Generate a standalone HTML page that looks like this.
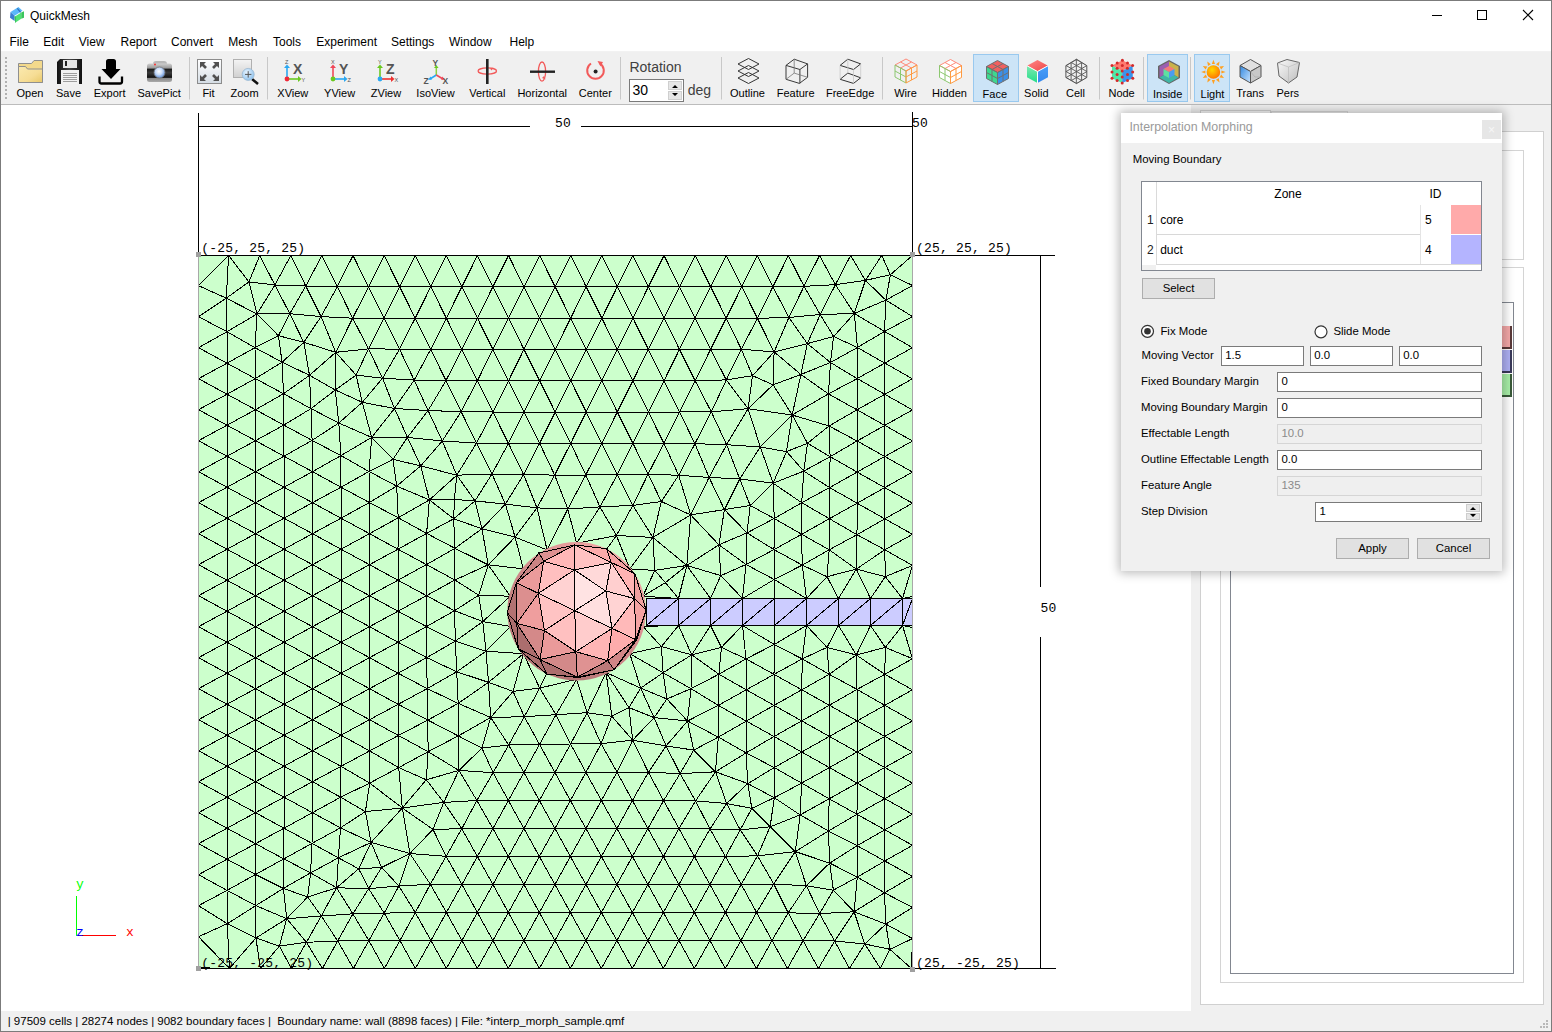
<!DOCTYPE html>
<html><head><meta charset="utf-8"><style>
html,body{margin:0;padding:0;width:1552px;height:1032px;overflow:hidden;background:#f0f0f0;font-family:"Liberation Sans", sans-serif;}
.r{position:absolute;}
.t{position:absolute;white-space:pre;}
</style></head><body>
<div class="r" style="left:0px;top:0px;width:1552px;height:52px;background:#fff"></div><div class="r" style="left:0px;top:51px;width:1552px;height:1px;background:#f2f2f2"></div><svg class="r" style="left:6px;top:4px" width="24" height="24" viewBox="0 0 24 24"><polygon points="4.5,8 12.5,3 16.5,6.8 8.6,11.8" fill="#5ab8fa"/><polygon points="4.5,8 8.6,11.8 8.6,17 4,13.8" fill="#3b7fd2"/><path d="M11.3 4.3L14.6 8.3" stroke="#2f6fbf" stroke-width="1.2"/><polygon points="8.6,12.8 15.2,8.6 15.2,14.8 9.2,18.8" fill="#4fe274"/><polygon points="15.2,8.6 18,7.2 18,13.8 15.2,14.8" fill="#3bc45e"/><polygon points="8.6,12.8 9.6,12.2 9.6,18.5 9.2,18.8" fill="#2fae4f"/></svg><div class="t" style="left:30px;top:9.84px;font-size:12px;line-height:12px;color:#000;font-family:"Liberation Sans", sans-serif;">QuickMesh</div><div class="r" style="left:1432px;top:15px;width:10px;height:1px;background:#000"></div><div class="r" style="left:1477px;top:10px;width:10px;height:10px;border:1px solid #000;box-sizing:border-box"></div><svg class="r" style="left:1522px;top:9px" width="12" height="12" viewBox="0 0 12 12"><path d="M1 1L11 11M11 1L1 11" stroke="#000" stroke-width="1.1"/></svg><div class="t" style="left:9.5px;top:35.54px;font-size:12px;line-height:12px;color:#000;font-family:"Liberation Sans", sans-serif;">File</div><div class="t" style="left:43.3px;top:35.54px;font-size:12px;line-height:12px;color:#000;font-family:"Liberation Sans", sans-serif;">Edit</div><div class="t" style="left:78.8px;top:35.54px;font-size:12px;line-height:12px;color:#000;font-family:"Liberation Sans", sans-serif;">View</div><div class="t" style="left:120.5px;top:35.54px;font-size:12px;line-height:12px;color:#000;font-family:"Liberation Sans", sans-serif;">Report</div><div class="t" style="left:171px;top:35.54px;font-size:12px;line-height:12px;color:#000;font-family:"Liberation Sans", sans-serif;">Convert</div><div class="t" style="left:228.2px;top:35.54px;font-size:12px;line-height:12px;color:#000;font-family:"Liberation Sans", sans-serif;">Mesh</div><div class="t" style="left:273px;top:35.54px;font-size:12px;line-height:12px;color:#000;font-family:"Liberation Sans", sans-serif;">Tools</div><div class="t" style="left:316.3px;top:35.54px;font-size:12px;line-height:12px;color:#000;font-family:"Liberation Sans", sans-serif;">Experiment</div><div class="t" style="left:391px;top:35.54px;font-size:12px;line-height:12px;color:#000;font-family:"Liberation Sans", sans-serif;">Settings</div><div class="t" style="left:449px;top:35.54px;font-size:12px;line-height:12px;color:#000;font-family:"Liberation Sans", sans-serif;">Window</div><div class="t" style="left:509.5px;top:35.54px;font-size:12px;line-height:12px;color:#000;font-family:"Liberation Sans", sans-serif;">Help</div><div class="r" style="left:0px;top:53px;width:1552px;height:51px;background:#f0f0f0"></div><div class="r" style="left:0px;top:104px;width:1552px;height:1px;background:#bcbcbc"></div><svg class="r" style="left:0;top:52px" width="1552" height="52" viewBox="0 52 1552 52"><defs>
<linearGradient id="gFold" x1="0" y1="0" x2="1" y2="1"><stop offset="0" stop-color="#fbeab0"/><stop offset="0.6" stop-color="#f6dd95"/><stop offset="1" stop-color="#e8c868"/></linearGradient>
<linearGradient id="gFit" x1="0" y1="0" x2="0" y2="1"><stop offset="0" stop-color="#ffffff"/><stop offset="1" stop-color="#d4dce4"/></linearGradient>
<linearGradient id="gZoom" x1="0" y1="0" x2="0" y2="1"><stop offset="0" stop-color="#f4f4f4"/><stop offset="1" stop-color="#d0d0d0"/></linearGradient>
<radialGradient id="gLens" cx="0.45" cy="0.4" r="0.6"><stop offset="0" stop-color="#ffffff"/><stop offset="0.5" stop-color="#c9dcf8"/><stop offset="1" stop-color="#5f8fd8"/></radialGradient>
<radialGradient id="gMag" cx="0.4" cy="0.35" r="0.7"><stop offset="0" stop-color="#e8f4ff"/><stop offset="1" stop-color="#8cc0ec"/></radialGradient>
<linearGradient id="gCam" x1="0" y1="0" x2="0" y2="1"><stop offset="0" stop-color="#d0d0d0"/><stop offset="0.25" stop-color="#9a9a9a"/><stop offset="0.3" stop-color="#1a1a1a"/><stop offset="0.5" stop-color="#3a3a3a"/><stop offset="0.75" stop-color="#111"/><stop offset="0.8" stop-color="#888"/><stop offset="1" stop-color="#aaa"/></linearGradient>
<linearGradient id="gFlop" x1="0" y1="0" x2="1" y2="0"><stop offset="0" stop-color="#111"/><stop offset="0.5" stop-color="#444"/><stop offset="1" stop-color="#111"/></linearGradient>
<radialGradient id="gSun" cx="0.4" cy="0.35" r="0.7"><stop offset="0" stop-color="#ffd800"/><stop offset="1" stop-color="#ff7000"/></radialGradient>
<linearGradient id="gTransL" x1="0" y1="0" x2="1" y2="1"><stop offset="0" stop-color="#2f86e0"/><stop offset="1" stop-color="#cde6ff"/></linearGradient>
<linearGradient id="gGray" x1="0" y1="0" x2="1" y2="1"><stop offset="0" stop-color="#fafafa"/><stop offset="1" stop-color="#bdbdbd"/></linearGradient>
<linearGradient id="gSolT" x1="0" y1="0" x2="1" y2="1"><stop offset="0" stop-color="#ff8888"/><stop offset="1" stop-color="#ee4444"/></linearGradient>
<linearGradient id="gSolL" x1="0" y1="0" x2="0" y2="1"><stop offset="0" stop-color="#7ee8b0"/><stop offset="1" stop-color="#22dd88"/></linearGradient>
<linearGradient id="gSolR" x1="0" y1="0" x2="0" y2="1"><stop offset="0" stop-color="#4aa0f8"/><stop offset="1" stop-color="#3388ee"/></linearGradient>
</defs><g fill="#b0b0b0"><rect x="5" y="57" width="2" height="2"/><rect x="5" y="61" width="2" height="2"/><rect x="5" y="65" width="2" height="2"/><rect x="5" y="69" width="2" height="2"/><rect x="5" y="73" width="2" height="2"/><rect x="5" y="77" width="2" height="2"/><rect x="5" y="81" width="2" height="2"/><rect x="5" y="85" width="2" height="2"/><rect x="5" y="89" width="2" height="2"/><rect x="5" y="93" width="2" height="2"/><rect x="5" y="97" width="2" height="2"/></g><path d="M189.5 57V99.5" stroke="#c8c8c8" stroke-width="1"/><path d="M267.5 57V99.5" stroke="#c8c8c8" stroke-width="1"/><path d="M620.5 57V99.5" stroke="#c8c8c8" stroke-width="1"/><path d="M721.5 57V99.5" stroke="#c8c8c8" stroke-width="1"/><path d="M882.5 57V99.5" stroke="#c8c8c8" stroke-width="1"/><path d="M1099.5 57V99.5" stroke="#c8c8c8" stroke-width="1"/><path d="M1143.5 57V99.5" stroke="#c8c8c8" stroke-width="1"/><path d="M1190.5 57V99.5" stroke="#c8c8c8" stroke-width="1"/><rect x="973.5" y="54.5" width="45" height="47" fill="#cce4f7" stroke="#99c9ef"/><rect x="1147.5" y="54.5" width="40" height="47" fill="#cce4f7" stroke="#99c9ef"/><rect x="1194.5" y="54.5" width="35" height="47" fill="#cce4f7" stroke="#99c9ef"/><path d="M18.5 63.5H31.5L34 60.5H42.5V82.5H18.5Z" fill="#f3d98c" stroke="#8f8f8f"/><path d="M18.5 66.5H25.5L27.5 69H42.5V82.5H18.5Z" fill="url(#gFold)" stroke="#8f8f8f"/><path d="M60 59H82V84H57V62Z" fill="url(#gFlop)"/><rect x="63" y="60" width="14" height="8" fill="#e6e6e6"/><rect x="65" y="61" width="2" height="5" fill="#222"/><rect x="61" y="70" width="18" height="14" fill="#f2f2f2"/><path d="M63 73.5H77M63 75.5H77M63 77.5H77M63 79.5H77M63 81.5H77" stroke="#888" stroke-width="0.8"/><path d="M106 61.5Q106 59 108.5 59H113.5Q116 59 116 61.5V69H120.5L111 79L101.5 69H106Z" fill="#000"/><path d="M99.5 76.5V81.5Q99.5 83.5 101.5 83.5H120Q122 83.5 122 81.5V76.5" fill="none" stroke="#000" stroke-width="2.3"/><path d="M153 64Q153 61 156 61H164Q167 61 167 64Z" fill="#b8b8b8"/><rect x="147" y="63.5" width="25" height="18.5" rx="2.5" fill="url(#gCam)"/><circle cx="159.5" cy="72.5" r="5.5" fill="url(#gLens)" stroke="#777" stroke-width="0.8"/><circle cx="155" cy="64.5" r="0.9" fill="#f22"/><rect x="197.5" y="59.5" width="24" height="24" fill="url(#gFit)" stroke="#8c8c8c"/><path d="M206 68L201 63" stroke="#505050" stroke-width="2.6"/><path d="M213 68L218 63" stroke="#505050" stroke-width="2.6"/><path d="M206 75L201 80" stroke="#505050" stroke-width="2.6"/><path d="M213 75L218 80" stroke="#505050" stroke-width="2.6"/><path d="M200 62h6l-6 6z M219 62h-6l6 6z M200 81h6l-6-6z M219 81h-6l6-6z" fill="#505050"/><rect x="233.5" y="59.5" width="18" height="18" fill="url(#gZoom)" stroke="#b0b0b0"/><path d="M252 79L258 84" stroke="#111" stroke-width="2.6"/><circle cx="248.2" cy="74.4" r="6" fill="url(#gMag)" stroke="#9ab8d0" stroke-width="0.8"/><path d="M245 74.4H251.4M248.2 71.2V77.6" stroke="#555" stroke-width="1"/><path d="M287 79V67" stroke="#2aa8f2" stroke-width="1.6"/><path d="M284 68L287 64.5L290 68Z" fill="#2aa8f2"/><path d="M287 79H299" stroke="#6ac820" stroke-width="1.6"/><path d="M298 76L301.5 79L298 82Z" fill="#6ac820"/><circle cx="287" cy="79" r="2.4" fill="#f02838"/><text x="293" y="73.8" font-family="Liberation Sans" font-weight="bold" font-size="14" fill="#555">X</text><text x="285" y="64" font-family="Liberation Sans" font-size="5.5" fill="#555">Z</text><text x="301.5" y="81.5" font-family="Liberation Sans" font-size="5.5" fill="#555">Y</text><path d="M333 79V67" stroke="#f04858" stroke-width="1.6"/><path d="M330 68L333 64.5L336 68Z" fill="#f04858"/><path d="M333 79H345" stroke="#2aa8f2" stroke-width="1.6"/><path d="M344 76L347.5 79L344 82Z" fill="#2aa8f2"/><circle cx="333" cy="79" r="2.4" fill="#6ac820"/><text x="339" y="73.8" font-family="Liberation Sans" font-weight="bold" font-size="14" fill="#555">Y</text><text x="331" y="64" font-family="Liberation Sans" font-size="5.5" fill="#555">X</text><text x="347.5" y="81.5" font-family="Liberation Sans" font-size="5.5" fill="#555">Z</text><path d="M380 79V67" stroke="#6ac820" stroke-width="1.6"/><path d="M377 68L380 64.5L383 68Z" fill="#6ac820"/><path d="M380 79H392" stroke="#f03030" stroke-width="1.6"/><path d="M391 76L394.5 79L391 82Z" fill="#f03030"/><circle cx="380" cy="79" r="2.4" fill="#2aa8f2"/><text x="386" y="73.8" font-family="Liberation Sans" font-weight="bold" font-size="14" fill="#555">Z</text><text x="378" y="64" font-family="Liberation Sans" font-size="5.5" fill="#555">Y</text><text x="394.5" y="81.5" font-family="Liberation Sans" font-size="5.5" fill="#555">X</text><path d="M436.3 75V67.5" stroke="#8ad040" stroke-width="1.5"/><path d="M434 68L436.3 65L438.6 68Z" fill="#6ac820"/><path d="M436.3 75L430 79" stroke="#2aa8f2" stroke-width="1.5"/><path d="M428 80L430.5 76.5L432 79.5Z" fill="#2aa8f2"/><path d="M436.3 75L443 79" stroke="#f04858" stroke-width="1.5"/><path d="M445 80L442.5 76.5L441 79.5Z" fill="#f04858"/><text x="432.5" y="66" font-family="Liberation Sans" font-weight="bold" font-size="8.5" fill="#555">Y</text><text x="423.5" y="83.5" font-family="Liberation Sans" font-weight="bold" font-size="8.5" fill="#555">Z</text><text x="442.5" y="83.5" font-family="Liberation Sans" font-weight="bold" font-size="8.5" fill="#555">X</text><ellipse cx="487.3" cy="71" rx="9.2" ry="3.1" fill="none" stroke="#f25a5a" stroke-width="1.3"/><rect x="486" y="59" width="2.6" height="25" fill="#222"/><path d="M490 68.5L493.5 67.5L491.5 70.5Z" fill="#f25a5a"/><ellipse cx="542" cy="71.6" rx="3.6" ry="9.6" fill="none" stroke="#f25a5a" stroke-width="1.3"/><rect x="530" y="70.5" width="25" height="2.4" fill="#222"/><path d="M544 76L545.5 79.5L542 78Z" fill="#f25a5a"/><path d="M591 63.5A8.3 8.3 0 1 0 600 63.5" fill="none" stroke="#f25a5a" stroke-width="2"/><path d="M597.5 61L603 62L600.5 66.5Z" fill="#f25a5a"/><circle cx="595.6" cy="71.6" r="2" fill="#222"/><path d="M738 64L748.5 58.5L759 64L748.5 69.5Z" fill="none" stroke="#333" stroke-width="1"/><path d="M738 71L748.5 65.5L759 71L748.5 76.5Z" fill="none" stroke="#333" stroke-width="1"/><path d="M738 78L748.5 72.5L759 78L748.5 83.5Z" fill="none" stroke="#333" stroke-width="1"/><path d="M794.2 59.2L807.6 63.9L799.9 69.5L786 65.4Z M786 65.4V79.3L799.4 83.4L807.6 77.3V63.9 M799.9 69.5V83.4" fill="none" stroke="#3a3a3a" stroke-width="1"/><path d="M794.2 59.2V73.1L786 79.3M794.2 73.1L807.6 77.3" fill="none" stroke="#777" stroke-width="0.8"/><path d="M847.8 59.2L860.7 63.9L853.5 69.5L840.1 65.4Z M847.8 73.1L860.7 77.8L853.5 83.4L840.1 79.3Z" fill="none" stroke="#333" stroke-width="1"/><path d="M840.1 65.4V79.3M853.5 69.5V83.4M860.7 63.9V77.8M847.8 59.2V73.1" stroke="#c8c8c8" stroke-width="0.8"/><polygon points="906.0,59.0 917.0,65.0 906.0,71.0 895.0,65.0" fill="none" stroke="#ff8a7a" stroke-width="1"/><path d="M911.5 62.0L900.5 68.0M900.5 62.0L911.5 68.0" stroke="#ff8a7a" stroke-width="1"/><polygon points="895.0,65.0 906.0,71.0 906.0,83.0 895.0,77.0" fill="none" stroke="#8cc870" stroke-width="1"/><path d="M900.5 68.0L900.5 80.0M895.0 71.0L906.0 77.0" stroke="#8cc870" stroke-width="1"/><polygon points="906.0,71.0 917.0,65.0 917.0,77.0 906.0,83.0" fill="none" stroke="#ff9a40" stroke-width="1"/><path d="M911.5 68.0L911.5 80.0M906.0 77.0L917.0 71.0" stroke="#ff9a40" stroke-width="1"/><polygon points="950.5,59.5 961.5,65.5 950.5,71.5 939.5,65.5" fill="#fff"/><polygon points="939.5,65.5 950.5,71.5 950.5,83.5 939.5,77.5" fill="#fff"/><polygon points="950.5,71.5 961.5,65.5 961.5,77.5 950.5,83.5" fill="#fff"/><polygon points="950.5,59.5 961.5,65.5 950.5,71.5 939.5,65.5" fill="none" stroke="#ff8a7a" stroke-width="1"/><path d="M956.0 62.5L945.0 68.5M945.0 62.5L956.0 68.5" stroke="#ff8a7a" stroke-width="1"/><polygon points="939.5,65.5 950.5,71.5 950.5,83.5 939.5,77.5" fill="none" stroke="#8cc870" stroke-width="1"/><path d="M945.0 68.5L945.0 80.5M939.5 71.5L950.5 77.5" stroke="#8cc870" stroke-width="1"/><polygon points="950.5,71.5 961.5,65.5 961.5,77.5 950.5,83.5" fill="none" stroke="#ff9a40" stroke-width="1"/><path d="M956.0 68.5L956.0 80.5M950.5 77.5L961.5 71.5" stroke="#ff9a40" stroke-width="1"/><polygon points="997.5,60.5 1008.5,66.5 997.5,72.5 986.5,66.5" fill="#f06060"/><polygon points="986.5,66.5 997.5,72.5 997.5,84.5 986.5,78.5" fill="#3dd890"/><polygon points="997.5,72.5 1008.5,66.5 1008.5,78.5 997.5,84.5" fill="#3a90e8"/><polygon points="997.5,60.5 1008.5,66.5 997.5,72.5 986.5,66.5" fill="none" stroke="#707070" stroke-width="1"/><path d="M1003.0 63.5L992.0 69.5M992.0 63.5L1003.0 69.5" stroke="#707070" stroke-width="1"/><polygon points="986.5,66.5 997.5,72.5 997.5,84.5 986.5,78.5" fill="none" stroke="#707070" stroke-width="1"/><path d="M992.0 69.5L992.0 81.5M986.5 72.5L997.5 78.5" stroke="#707070" stroke-width="1"/><polygon points="997.5,72.5 1008.5,66.5 1008.5,78.5 997.5,84.5" fill="none" stroke="#707070" stroke-width="1"/><path d="M1003.0 69.5L1003.0 81.5M997.5 78.5L1008.5 72.5" stroke="#707070" stroke-width="1"/><polygon points="1037.5,60.0 1048.0,65.8 1037.5,71.5 1027.0,65.8" fill="url(#gSolT)"/><polygon points="1027.0,65.8 1037.5,71.5 1037.5,83.0 1027.0,77.2" fill="url(#gSolL)"/><polygon points="1037.5,71.5 1048.0,65.8 1048.0,77.2 1037.5,83.0" fill="url(#gSolR)"/><path d="M1037.5 71.5V83M1027 65.75L1037.5 71.5L1048 65.75" stroke="#fff" stroke-width="1" fill="none"/><clipPath id="hexc"><polygon points="1076.5,59.2 1086.8,65.6 1086.8,77.5 1076.5,83.6 1065.9,77.5 1065.9,65.6"/></clipPath><path clip-path="url(#hexc)" d="M1071.12 58V85M1076.35 58V85M1081.58 58V85M1060 14.03L1093 33.07M1060 33.07L1093 14.03M1060 20.03L1093 39.07M1060 39.07L1093 20.03M1060 26.03L1093 45.07M1060 45.07L1093 26.03M1060 32.03L1093 51.07M1060 51.07L1093 32.03M1060 38.03L1093 57.07M1060 57.07L1093 38.03M1060 44.03L1093 63.07M1060 63.07L1093 44.03M1060 50.03L1093 69.07M1060 69.07L1093 50.03M1060 56.03L1093 75.07M1060 75.07L1093 56.03M1060 62.03L1093 81.07M1060 81.07L1093 62.03M1060 68.03L1093 87.07M1060 87.07L1093 68.03M1060 74.03L1093 93.07M1060 93.07L1093 74.03M1060 80.03L1093 99.07M1060 99.07L1093 80.03M1060 86.03L1093 105.07M1060 105.07L1093 86.03M1060 92.03L1093 111.07M1060 111.07L1093 92.03M1060 98.03L1093 117.07M1060 117.07L1093 98.03M1060 104.03L1093 123.07M1060 123.07L1093 104.03M1060 110.03L1093 129.07M1060 129.07L1093 110.03" stroke="#555" stroke-width="0.9" fill="none"/><polygon points="1076.5,59.2 1086.8,65.6 1086.8,77.5 1076.5,83.6 1065.9,77.5 1065.9,65.6" fill="none" stroke="#555" stroke-width="1"/><polygon points="1122.4,60.2 1132.6,65.6 1122.2,71.0 1112.0,65.6" fill="#ff7a70"/><polygon points="1112.0,65.6 1122.2,71.0 1122.2,83.0 1112.0,78.2" fill="#50e8a8"/><polygon points="1122.2,71.0 1132.6,65.6 1132.8,78.2 1122.2,83.0" fill="#3a94ec"/><g fill="#d42a2a"><circle cx="1127.4" cy="68.3" r="1.5"/><circle cx="1117.1" cy="74.5" r="1.5"/><circle cx="1127.5" cy="62.9" r="1.5"/><circle cx="1127.5" cy="74.5" r="1.5"/><circle cx="1117.1" cy="68.3" r="1.5"/><circle cx="1132.7" cy="71.9" r="1.5"/><circle cx="1112.0" cy="65.6" r="1.5"/><circle cx="1132.6" cy="65.6" r="1.5"/><circle cx="1132.8" cy="78.2" r="1.5"/><circle cx="1122.2" cy="71.0" r="1.5"/><circle cx="1122.2" cy="77.0" r="1.5"/><circle cx="1122.2" cy="83.0" r="1.5"/><circle cx="1117.1" cy="80.6" r="1.5"/><circle cx="1127.5" cy="80.6" r="1.5"/><circle cx="1112.0" cy="78.2" r="1.5"/><circle cx="1122.4" cy="60.2" r="1.5"/><circle cx="1117.2" cy="62.9" r="1.5"/><circle cx="1122.3" cy="65.6" r="1.5"/><circle cx="1112.0" cy="71.9" r="1.5"/></g><polygon points="1169,60 1180,66 1180,78 1169,84 1158,78 1158,66" fill="#666"/><polygon points="1169,61.5 1169,72 1159.5,77.5 1159.5,66.5" fill="#9b5fb0"/><polygon points="1169,61.5 1178.5,66.5 1178.5,77.5 1169,72" fill="#c9b24a"/><polygon points="1159.5,77.5 1169,72 1178.5,77.5 1169,83" fill="#3fb6a6"/><polygon points="1169.0,66.0 1174.5,69.0 1169.0,72.0 1163.5,69.0" fill="#f47a7a"/><polygon points="1163.5,69.0 1169.0,72.0 1169.0,78.0 1163.5,75.0" fill="#5ee0a0"/><polygon points="1169.0,72.0 1174.5,69.0 1174.5,75.0 1169.0,78.0" fill="#4a9cf0"/><g fill="#ffa020"><polygon points="1225.6,72.0 1221.4,70.4 1221.4,73.6"/><polygon points="1224.0,78.1 1221.2,74.6 1219.5,77.4"/><polygon points="1219.5,82.6 1218.8,78.1 1216.0,79.8"/><polygon points="1213.4,84.2 1215.0,80.0 1211.8,80.0"/><polygon points="1207.3,82.6 1210.8,79.8 1208.0,78.1"/><polygon points="1202.8,78.1 1207.3,77.4 1205.6,74.6"/><polygon points="1201.2,72.0 1205.4,73.6 1205.4,70.4"/><polygon points="1202.8,65.9 1205.6,69.4 1207.3,66.6"/><polygon points="1207.3,61.4 1208.0,65.9 1210.8,64.2"/><polygon points="1213.4,59.8 1211.8,64.0 1215.0,64.0"/><polygon points="1219.5,61.4 1216.0,64.2 1218.8,65.9"/><polygon points="1224.0,65.9 1219.5,66.6 1221.2,69.4"/></g><circle cx="1213.4" cy="72" r="6.8" fill="url(#gSun)"/><polygon points="1250.5,59.5 1261,65.5 1250.5,71.5 1240,65.5" fill="#e0e0e0" stroke="#555" stroke-width="1"/><polygon points="1240,65.5 1250.5,71.5 1250.5,83 1240,77" fill="url(#gTransL)" stroke="#555" stroke-width="1"/><polygon points="1250.5,71.5 1261,65.5 1261,77 1250.5,83" fill="#c8c8c8" stroke="#555" stroke-width="1"/><path d="M1250.5 71.5L1255 77L1261 77" stroke="#aaa" stroke-width="0.7" fill="none"/><polygon points="1287,59.5 1299.5,62.5 1297,77 1288.5,83 1279,76 1277.5,63" fill="url(#gGray)" stroke="#666" stroke-width="1"/><path d="M1277.5 63L1288.5 67L1299.5 62.5M1288.5 67L1288.5 83" stroke="#bbb" stroke-width="0.7" fill="none"/></svg><div class="t" style="left:-70px;width:200px;text-align:center;top:87.69px;font-size:11px;line-height:11px;color:#000;font-family:"Liberation Sans", sans-serif;">Open</div><div class="t" style="left:-31.5px;width:200px;text-align:center;top:87.69px;font-size:11px;line-height:11px;color:#000;font-family:"Liberation Sans", sans-serif;">Save</div><div class="t" style="left:9.6px;width:200px;text-align:center;top:87.69px;font-size:11px;line-height:11px;color:#000;font-family:"Liberation Sans", sans-serif;">Export</div><div class="t" style="left:59.2px;width:200px;text-align:center;top:87.69px;font-size:11px;line-height:11px;color:#000;font-family:"Liberation Sans", sans-serif;">SavePict</div><div class="t" style="left:108.5px;width:200px;text-align:center;top:87.69px;font-size:11px;line-height:11px;color:#000;font-family:"Liberation Sans", sans-serif;">Fit</div><div class="t" style="left:144.5px;width:200px;text-align:center;top:87.69px;font-size:11px;line-height:11px;color:#000;font-family:"Liberation Sans", sans-serif;">Zoom</div><div class="t" style="left:192.8px;width:200px;text-align:center;top:87.69px;font-size:11px;line-height:11px;color:#000;font-family:"Liberation Sans", sans-serif;">XView</div><div class="t" style="left:239.6px;width:200px;text-align:center;top:87.69px;font-size:11px;line-height:11px;color:#000;font-family:"Liberation Sans", sans-serif;">YView</div><div class="t" style="left:286px;width:200px;text-align:center;top:87.69px;font-size:11px;line-height:11px;color:#000;font-family:"Liberation Sans", sans-serif;">ZView</div><div class="t" style="left:335.5px;width:200px;text-align:center;top:87.69px;font-size:11px;line-height:11px;color:#000;font-family:"Liberation Sans", sans-serif;">IsoView</div><div class="t" style="left:387.3px;width:200px;text-align:center;top:87.69px;font-size:11px;line-height:11px;color:#000;font-family:"Liberation Sans", sans-serif;">Vertical</div><div class="t" style="left:442.2px;width:200px;text-align:center;top:87.69px;font-size:11px;line-height:11px;color:#000;font-family:"Liberation Sans", sans-serif;">Horizontal</div><div class="t" style="left:495.3px;width:200px;text-align:center;top:87.69px;font-size:11px;line-height:11px;color:#000;font-family:"Liberation Sans", sans-serif;">Center</div><div class="t" style="left:647.5px;width:200px;text-align:center;top:87.69px;font-size:11px;line-height:11px;color:#000;font-family:"Liberation Sans", sans-serif;">Outline</div><div class="t" style="left:695.7px;width:200px;text-align:center;top:87.69px;font-size:11px;line-height:11px;color:#000;font-family:"Liberation Sans", sans-serif;">Feature</div><div class="t" style="left:750.1px;width:200px;text-align:center;top:87.69px;font-size:11px;line-height:11px;color:#000;font-family:"Liberation Sans", sans-serif;">FreeEdge</div><div class="t" style="left:805.5px;width:200px;text-align:center;top:87.69px;font-size:11px;line-height:11px;color:#000;font-family:"Liberation Sans", sans-serif;">Wire</div><div class="t" style="left:849.5px;width:200px;text-align:center;top:87.69px;font-size:11px;line-height:11px;color:#000;font-family:"Liberation Sans", sans-serif;">Hidden</div><div class="t" style="left:894.8px;width:200px;text-align:center;top:88.69px;font-size:11px;line-height:11px;color:#000;font-family:"Liberation Sans", sans-serif;">Face</div><div class="t" style="left:936.3px;width:200px;text-align:center;top:87.69px;font-size:11px;line-height:11px;color:#000;font-family:"Liberation Sans", sans-serif;">Solid</div><div class="t" style="left:975.5px;width:200px;text-align:center;top:87.69px;font-size:11px;line-height:11px;color:#000;font-family:"Liberation Sans", sans-serif;">Cell</div><div class="t" style="left:1021.6px;width:200px;text-align:center;top:87.69px;font-size:11px;line-height:11px;color:#000;font-family:"Liberation Sans", sans-serif;">Node</div><div class="t" style="left:1067.7px;width:200px;text-align:center;top:88.69px;font-size:11px;line-height:11px;color:#000;font-family:"Liberation Sans", sans-serif;">Inside</div><div class="t" style="left:1112.5px;width:200px;text-align:center;top:88.69px;font-size:11px;line-height:11px;color:#000;font-family:"Liberation Sans", sans-serif;">Light</div><div class="t" style="left:1150.1px;width:200px;text-align:center;top:87.69px;font-size:11px;line-height:11px;color:#000;font-family:"Liberation Sans", sans-serif;">Trans</div><div class="t" style="left:1187.8px;width:200px;text-align:center;top:87.69px;font-size:11px;line-height:11px;color:#000;font-family:"Liberation Sans", sans-serif;">Pers</div><div class="t" style="left:629.4px;top:59.75px;font-size:14px;line-height:14px;color:#404040;font-family:"Liberation Sans", sans-serif;">Rotation</div><div class="r" style="left:629px;top:79px;width:55px;height:23px;background:#fff;border:1px solid #7a7a7a;box-sizing:border-box"></div><div class="t" style="left:632.5px;top:83.45px;font-size:14px;line-height:14px;color:#000;font-family:"Liberation Sans", sans-serif;">30</div><div class="r" style="left:668px;top:81px;width:14px;height:9px;background:#e6e6e6;border:1px solid #cfcfcf;box-sizing:border-box"></div><div class="r" style="left:668px;top:91px;width:14px;height:9px;background:#e6e6e6;border:1px solid #cfcfcf;box-sizing:border-box"></div><svg class="r" style="left:668px;top:81px" width="14" height="19"><path d="M4 7h6L7 4z M4 12h6L7 15z" fill="#000"/></svg><div class="t" style="left:687.7px;top:83.45px;font-size:14px;line-height:14px;color:#404040;font-family:"Liberation Sans", sans-serif;">deg</div><div class="r" style="left:0px;top:105px;width:1191px;height:906px;background:#fff"></div><svg class="r" style="left:0;top:0" width="1552" height="1032" viewBox="0 0 1552 1032"><defs><clipPath id="ct"><polygon points="198.5,255.5 247,280 284,316 307,339 333,391 357,397 397,438 418,461 455,501 477,524 514,564 530,576 577,611.5 640,590 651,573 715,512 740,487 782,452 768,384 801,370 834,334 855,311 862,280 881,255.5 912.5,255.5"/></clipPath><clipPath id="cr"><polygon points="912.5,255.5 881,255.5 862,280 855,311 834,334 801,370 768,384 782,452 740,487 715,512 651,573 640,590 577,611.5 590,672 600,683 626,709 660,716 694,752 717,774 752,810 771,829 796,852 806,886 834,891 855,913 862,943 881,968.5 912.5,968.5"/></clipPath><clipPath id="cb"><polygon points="912.5,968.5 881,968.5 862,943 855,913 834,891 806,886 796,852 771,829 752,810 717,774 694,752 660,716 626,709 600,683 590,672 577,611.5 530,640 521,654 495,685 464,741 425,781 401,804 382,865 355,870 334,889 307,898 286,919 254,938 198.5,968.5"/></clipPath><clipPath id="cl"><polygon points="198.5,968.5 254,938 286,919 307,898 334,889 355,870 382,865 401,804 425,781 464,741 495,685 521,654 530,640 577,611.5 530,576 514,564 477,524 455,501 418,461 397,438 357,397 333,391 307,339 284,316 247,280 198.5,255.5"/></clipPath></defs><rect x="198.5" y="255.5" width="714.0" height="713.0" fill="#ccffcc"/><g stroke="#000" stroke-width="1" fill="none" shape-rendering="crispEdges"><path d="M539.4 800.5L523.9 772.5M818.4 968.5L849.4 968.5M524 286.8L555.2 286.8M774.5 598.5L806.5 598.5M461.8 349.4L492.9 349.4M652.9 537.4L686.8 565.5M454.5 610.7L455.4 641.1M654.1 717.6L628.9 707.6M774.5 625.5L806.5 625.5M772 940.5L756.4 968.5M492.9 349.4L524 349.4M617.3 412L648.4 412M857.1 441L857.1 472.1M356.1 375.1L335.3 390M773.7 884L806.4 885.8M648.4 412L679.6 412M382.6 378.2L362.3 402.3M801.7 534.3L802.2 565.1M616.4 535.5L652.9 537.4M341 642.2L369.5 657.7M880.4 968.5L864.8 944M284 766.2L312.5 750.7M691.8 654.8L691 688.7M632.9 318.1L617.3 349.4M508.4 443.3L492 474M694.4 912.5L725.4 912.5M554.7 475.1L567.8 509M341 673.2L369.5 688.7M691 688.7L687.5 721M227 518.2L198.5 533.7M539.6 443.3L523.6 474.6M492.9 828.5L523.9 828.5M800.2 814.9L774.3 797.7M554.9 940.5L539.4 968.5M857 814.3L828.4 831M884.8 456.5L857.1 441M773.1 483.2L750.2 505.5M227.3 923.7L255.9 938M523.9 940.5L539.4 912.5M430.8 286.8L446.3 255.5M490.7 717.5L524.3 716.7M857.1 845.7L829.7 863.1M710 829L726.6 803.5M255.5 440.7L255.5 471.7M198.5 936.7L198.5 967.7M352.9 913.8L368.7 888.6M725.5 856.6L740.2 829.9M255.5 471.7L255.5 502.7M884.8 736.4L912.5 752M358.7 868.8L381.6 867.4M371.7 437.4L369 471.5M616.4 535.5L606.1 550M227 487.2L255.5 471.7M399.9 940.5L430.9 940.5M710.5 625.5L742.5 625.5M430.9 940.5L415.4 968.5M255.5 874.5L283.4 888.4M398.9 886L430.3 884.3M398 580.2L426.4 564.6M477.4 318.1L492.9 349.4M305.8 286L321.9 255.5M680.1 773.6L715.5 771.8M726.6 444.7L709.1 477.4M679 828.6L710 829M711.3 411.8L726.6 444.7M801.7 502.7L773.1 483.2M710 829L740.2 829.9M198.5 378.7L198.5 409.7M335.7 352.3L335.3 390M829.7 863.1L806.4 885.8M691.8 654.8L661.4 646.6M508.4 912.5L523.9 884.5M829.4 767.6L801.7 752M801.8 689.8L774 705.4M912.5 689.8L912.5 720.9M774 705.4L746.3 721.1M640.7 688.1L628.9 707.6M709.9 940.5L694.4 912.5M322.4 968.5L353.4 968.5M227 611.2L198.5 595.7M884.5 331.4L857.4 347.5M255.5 657.7L255.5 688.7M740.9 940.5L725.4 912.5M539.4 912.5L523.9 884.5M601.4 800.5L617 772.1M312.5 533.7L312.5 564.7M648.4 772.3L666.1 745.9M306.4 942.3L291.4 968.5M725.4 968.5L756.4 968.5M369.5 626.7L369.5 657.7M586.2 286.8L617.3 286.8M806.5 598.5L838.5 598.5M369.5 657.7L369.5 688.7M740.9 940.5L725.4 968.5M456.7 671.8L458.2 703.4M640.7 688.1L606.1 672.6M806.5 625.5L838.5 625.5M555.2 349.4L586.2 349.4M227 331.7L255 347.7M338.4 857.8L358.7 868.8M857.1 503.2L857 534.7M255.5 626.7L284 611.2M711.3 411.8L748.1 408.7M341 611.2L369.5 595.7M227 363.2L255.3 378.6M857 534.7L856.3 569.1M664 318.1L648.4 349.4M283.5 393.7L309.5 375.3M570.7 443.3L585.8 475M524 349.4L508.5 380.7M227 487.2L198.5 471.7M369.5 626.7L398 642.2M774.1 351.9L773.1 384.8M801.8 689.8L801.7 720.9M695.1 318.1L679.5 349.4M601.8 443.3L617.2 474.7M617.2 474.7L632.8 505.4M556 714.7L576.6 679.3M827 576.7L802.2 565.1M884.8 518.8L857 534.7M686.8 565.5L710.5 598.5M508.7 745L490.7 717.5M774 549.6L746 564.5M585.9 940.5L601.4 912.5M756.6 912.5L741.2 884.4M787.4 968.5L818.4 968.5M748.1 408.7L792.2 415M415.3 912.6L430.3 884.3M772.9 286.8L804 286.3M368.7 888.6L381.6 867.4M402.3 808L426.3 779.8M741.3 349.2L774.1 351.9M774.1 351.9L807.3 343.6M274.9 285L259.7 255.5M570.7 443.3L601.8 443.3M284 549.2L312.5 533.7M227 797.2L198.5 781.7M567.8 509L547.1 550M601.8 443.3L632.9 443.3M227 549.2L255.5 533.7M284 580.2L312.5 564.7M461.9 940.5L492.9 940.5M398 642.2L426.7 657.6M600 506.9L576.6 543.3M690.7 514.9L652.9 537.4M368.5 348.9L382.6 378.2M492.9 940.5L523.9 940.5M884.8 549.8L912.5 565.4M458.2 703.4L458.3 735.9M539.6 318.1L555.2 349.4M663.4 856.5L694.4 856.5M399.5 349.1L414.2 380.1M478.7 595.2L510.3 596.2M492.9 884.5L523.9 884.5M570.7 318.1L586.2 349.4M481.9 748.1L508.7 745M802.2 565.1L774 549.6M760.3 447L792.2 415M443.7 802.4L476.9 800.5M290.8 255.5L321.9 255.5M774 674.4L746 658.9M306.4 942.3L286.7 918.7M830.1 456.7L803.8 471.1M227 549.2L198.5 564.7M585.9 772.4L570.6 744M828.4 831L800.2 814.9M229.4 968.5L260.4 968.5M227 331.7L227 363.2M477.4 968.5L508.4 968.5M885.9 300.1L912.5 285.5M523.9 828.5L508.4 800.5M601.4 912.5L616.9 884.5M198.5 657.7L198.5 688.7M255.5 719.7L255.5 750.7M884.5 331.4L912.5 316.6M227 673.2L198.5 657.7M803.1 940.7L788.2 912.8M555.2 286.8L570.7 255.5M865.4 280.4L854.3 313.5M663.6 800.6L680.1 773.6M312.5 595.7L312.5 626.7M576.6 679.3L547.1 672.6M773.1 483.2L739.7 479M678.9 940.5L694.4 968.5M884.8 425.4L912.5 441M369.5 688.7L369.5 719.7M255.5 688.7L284 704.2M884.8 767.5L884.8 798.7M283.8 425.1L312.1 440.4M884.5 892.8L912.5 876.4M227 766.2L255.5 750.7M255.8 905.6L255.9 938M478.7 595.2L482.8 621.6M752.5 375.7L773.1 384.8M774.2 579.5L806.5 598.5M227 425.2L198.5 440.7M284 456.2L312.5 471.7M554.7 475.1L537 507.9M341 673.2L369.5 657.7M227 425.2L255.5 440.7M829.4 705.3L829.4 736.4M856.3 655L857 689.4M260.4 968.5L255.9 938M757.4 318.3L774.1 351.9M586.2 349.4L570.7 380.7M746.3 721.1L746.1 752.9M227 859.2L198.5 874.7M663.1 672.7L640.7 688.1M788.9 317.5L807.3 343.6M663.9 443.3L678.7 475.3M747 532.9L718.9 544.8M409.9 853.5L381.6 867.4M857.1 845.7L828.4 831M456.8 475.2L429.4 499.9M829.2 674.3L801.8 689.8M774.2 518.5L750.2 505.5M461.9 286.8L446.3 255.5M829.4 705.3L801.7 720.9M458.9 770.4L481.9 748.1M570.6 744L556 714.7M278.4 335.7L282.1 362.2M884.8 767.5L912.5 752M312.4 812.7L312 843.4M678.9 940.5L694.4 912.5M198.5 285.7L198.5 255.5M227 735.2L198.5 750.7M227 611.2L255.5 626.7M338.4 857.8L371.1 842.4M632.8 505.4L661.3 501.5M341 518.2L369.5 533.7M255.8 905.6L283.4 888.4M663.9 443.3L694.9 443.7M284 642.2L312.5 626.7M570.4 912.5L601.4 912.5M505.4 504.1L515.1 537.1M554.9 940.5L585.9 940.5M829.7 863.1L833.4 890.2M718.3 705.4L718.3 737.1M748.1 408.7L726.6 444.7M725.5 856.6L757.5 855.8M885.9 300.1L865.4 280.4M461.8 349.4L477.4 380.7M554.9 884.5L585.9 884.5M801.8 689.8L774 674.4M774 705.4L746.3 689.8M539.5 744.4L570.6 744M398.9 886L409.9 853.5M801.7 720.9L774 705.4M774 736.5L746.3 721.1M857.1 441L830.1 456.7M718.9 544.8L686.8 565.5M585.9 828.5L601.4 800.5M257 314L255 347.7M829.4 518.7L801.7 534.3M601.4 800.5L585.9 772.4M884.8 363.1L857.4 347.5M648.4 772.3L632.7 740.2M912.5 472.1L912.5 503.2M880.4 968.5L911.4 968.5M632.4 800.5L617 772.1M430.3 884.3L409.9 853.5M663.4 912.5L678.9 884.5M680.1 773.6L666.1 745.9M570.7 255.5L601.8 255.5M255.9 938L286.7 918.7M740.2 829.9L751.8 808.4M508.5 318.1L539.6 318.1M286.7 918.7L307.6 897M640.7 688.1L629.8 653.7M341 766.3L340.6 797.2M338.4 857.8L336.6 887.8M227 363.2L255 347.7M426.5 626.6L426.7 657.6M255.5 750.7L284 766.2M284 487.2L312.5 502.7M341 735.2L369.6 750.9M369.5 626.7L398 611.2M283.8 858.9L312 843.4M337.3 286.6L321.1 316.6M601.8 443.3L585.8 475M414.2 380.1L394.5 408.5M399.7 286.8L384.1 255.5M284 518.2L312.5 533.7M617.2 474.7L600 506.9M369.5 657.7L398 642.2M586.2 412L601.8 443.3M632.9 443.3L617.2 474.7M632.8 505.4L616.4 535.5M341 766.3L369.6 750.9M648.1 474.1L632.8 505.4M585.9 828.5L616.9 828.5M807.3 343.6L800.9 374.5M718.9 674.2L691.8 654.8M746 658.9L718.9 674.2M556 714.7L587.1 712.7M488.2 564.8L523.4 568.9M774 549.6L747 532.9M291.4 968.5L322.4 968.5M255.5 533.7L255.5 564.7M616.9 884.5L601.4 856.5M774.2 579.5L746 564.5M227 611.2L227 642.2M198.5 719.7L198.5 750.7M415.3 912.6L398.9 886M476.9 800.5L493.1 772.7M857.3 877.1L833.4 890.2M523.9 772.5L539.5 744.4M311 408.6L312.1 440.4M368.7 888.6L358.7 868.8M912.5 783.1L912.5 814.2M746 564.5L742.5 598.5M394.5 408.5L407.4 437.4M312.1 440.4L312.5 471.7M369.4 502.5L369.5 533.7M461.9 286.8L492.9 286.8M227 704.2L198.5 688.7M369.5 533.7L369.5 564.7M393 459.3L420.7 465.9M454.9 548.3L454.9 580M774.3 797.7L751.8 808.4M726.6 803.5L747.8 783.6M742.5 625.5L774.5 625.5M430.7 349.4L461.8 349.4M454.9 580L454.5 610.7M398 642.2L426.5 626.6M586.2 412L617.3 412M857 409.8L857.1 441M369 471.5L396.7 486.1M284 704.2L312.5 719.7M399.5 349.1L382.6 378.2M305.8 286L289.8 313.7M555.2 286.8L539.6 318.1M885.3 576.7L912.5 565.4M369.4 502.5L398.2 517.8M801.7 502.7L801.7 534.3M570.7 318.1L555.2 349.4M476.5 443.1L492 474M492 474L505.4 504.1M482.8 621.6L510.3 596.2M884.8 394.3L857 409.8M523.9 940.5L539.4 968.5M227 580.2L198.5 564.7M601.4 912.5L585.9 884.5M830.5 362.5L833.6 336.5M801.6 783.1L774.2 767.6M524.3 716.7L513.1 691.4M884.8 798.7L857.1 783.1M632.4 912.5L616.9 884.5M647.9 828.5L663.6 800.6M663.6 800.6L648.4 772.3M884.8 425.4L857 409.8M556 714.7L539.7 688.1M492.9 884.5L508.4 856.5M446.1 856.3L433 829.4M819.5 255.5L850.6 255.5M648.4 286.8L679.5 286.8M695.5 800.9L680.1 773.6M760.3 447L773.1 483.2M307.6 897L336.6 887.8M679.5 286.8L710.7 286.8M617.3 349.4L648.4 349.4M515.1 537.1L482 528.7M336.6 887.8L358.7 868.8M648.4 349.4L679.5 349.4M442.3 441L476.5 443.1M476.5 443.1L508.4 443.3M227 425.2L255.5 409.7M284 456.2L312.1 440.4M398.2 517.8L426.6 533.4M426.4 564.6L454.9 548.3M801.7 752L801.6 783.1M227 456.2L198.5 440.7M227 456.2L255.5 440.7M337.3 286.6L353 255.5M368.8 940.6L399.9 940.5M399.7 286.8L415.2 318.1M340.6 797.2L365.4 811.6M369.5 688.7L398 673.2M456.7 671.8L488.5 682.3M663.1 672.7L666.9 699M788.9 317.5L774.1 351.9M663.9 443.3L648.1 474.1M255.5 843.7L283.8 858.9M368.7 888.6L398.9 886M278.4 335.7L289.8 313.7M477.4 380.7L461.1 411.6M340.5 827.8L371.1 842.4M369.5 719.7L398.2 704.3M227 890.4L198.5 874.7M772.9 286.8L788.4 255.5M694.9 443.7L678.7 475.3M647.9 828.5L679 828.6M709.1 477.4L690.7 514.9M746 564.5L718.9 544.8M718.3 737.1L687.5 721M513.1 691.4L523.4 653.7M829.4 705.3L801.8 689.8M398.7 767.6L426.3 779.8M885.3 647.4L856.3 655M912.5 534.3L912.5 565.4M477.4 912.5L492.9 884.5M827 647.4L806.5 625.5M513.1 691.4L539.7 688.1M255.5 595.7L255.5 626.7M802.2 658.9L774 674.4M666.9 699L654.1 717.6M678.9 940.5L663.4 912.5M407.4 437.4L420.7 465.9M632.9 255.5L664 255.5M539.4 800.5L554.9 772.5M255.5 626.7L255.5 657.7M312.5 471.7L312.5 502.7M283.4 888.4L307.6 897M312.5 502.7L312.5 533.7M369.5 564.7L369.5 595.7M663.1 672.7L629.8 653.7M642.9 626.4L629.8 653.7M884.8 518.8L912.5 503.2M369.5 595.7L369.5 626.7M881.7 255.5L865.4 280.4M648.4 286.8L664 255.5M773.7 884L795.3 851.6M227 642.2L255.5 626.7M912.5 565.4L902.5 598.5M455.4 641.1L456.7 671.8M226.3 298.2L257 314M227 673.2L255.5 657.7M857.1 472.1L857.1 503.2M284 766.2L312.5 781.7M398.4 735.5L427.8 720.1M632.9 318.1L648.4 349.4M461.8 349.4L446 380.6M537 507.9L515.1 537.1M617.3 286.8L601.8 318.1M695.1 380.7L679.6 412M369.5 564.7L398 580.2M508.4 800.5L539.4 800.5M492.9 349.4L477.4 380.7M539.6 443.3L554.7 475.1M857.1 441L829 426M828.4 393.9L800.9 374.5M884.8 456.5L857.1 472.1M720.8 575.6L686.8 565.5M481.9 748.1L458.3 735.9M198.5 533.7L198.5 564.7M663.4 912.5L647.9 884.5M884.8 487.6L857.1 503.2M255.5 812.7L255.5 843.7M884.8 861L857.1 845.7M740.2 829.9L770.1 826.8M912.5 845.3L912.5 876.4M694.4 912.5L678.9 884.5M554.9 884.5L570.4 856.5M312.5 688.7L312.5 719.7M228.6 255.5L198.5 255.5M747 532.9L724.4 509.6M881.7 255.5L912.5 255.5M710.7 286.8L741.8 286.8M369.7 783.1L365.4 811.6M741.8 286.8L772.9 286.8M679.5 349.4L710.6 349.4M757.5 855.8L795.3 851.6M365.4 811.6L371.1 842.4M710.6 349.4L741.3 349.2M368.8 940.6L353.4 968.5M508.4 443.3L539.6 443.3M227 487.2L255.5 502.7M890.4 274.7L885.9 300.1M454.5 610.7L478.7 595.2M857.1 720.9L857.1 752M835.4 284.7L865.4 280.4M537 507.9L547.1 550M539.6 443.3L570.7 443.3M227 518.2L255.5 533.7M284 518.2L312.5 502.7M398 580.2L426.5 595.7M857.1 752L857.1 783.1M680.1 773.6L693.7 750.1M430.9 940.5L461.9 940.5M227 828.2L198.5 843.7M773.1 483.2L774.2 518.5M229.4 968.5L198.5 967.7M335.7 352.3L356.1 375.1M488.2 564.8L510.3 596.2M430.3 884.3L461.9 884.5M829.7 863.1L795.3 851.6M912.5 285.5L912.5 316.6M691.8 654.8L663.1 672.7M829.4 767.6L801.6 783.1M632.7 740.2L611.8 716.2M523.9 772.5L508.7 745M884.8 705.3L857.1 720.9M890.4 274.7L912.5 285.5M740.9 940.5L756.6 912.5M539.4 912.5L554.9 884.5M554.9 772.5L539.5 744.4M226.3 298.2L227 331.7M428.1 410.6L407.4 437.4M570.4 912.5L585.9 884.5M458.9 770.4L426.3 779.8M384.1 318.1L415.2 318.1M884.8 456.5L912.5 472.1M629.8 653.7L606.1 672.6M617.3 286.8L601.8 255.5M396.7 486.1L420.7 465.9M414.2 380.1L446 380.6M606.1 672.6L576.6 679.3M726.6 444.7L760.3 447M885.8 924.1L912.5 907.5M369.4 502.5L396.7 486.1M227 704.2L255.5 688.7M616.9 940.5L647.9 940.5M312.5 533.7L341 518.2M884.5 892.8L854.1 911.8M283.5 393.7L311 408.6M524 349.4L539.6 380.7M369.5 533.7L398.2 517.8M647.9 940.5L678.9 940.5M616.9 884.5L647.9 884.5M792.2 415L773.1 384.8M429.4 499.9L453.7 518.8M695.1 318.1L710.6 349.4M523.6 474.6L505.4 504.1M430.9 940.5L446.4 968.5M647.9 884.5L678.9 884.5M774.3 797.7L747.8 783.6M726.2 318.1L741.3 349.2M310.6 872.9L307.6 897M555.2 349.4L539.6 380.7M726.6 803.5L715.5 771.8M601.4 800.5L632.4 800.5M260.4 968.5L291.4 968.5M857.1 503.2L829.6 487.6M492.9 286.8L477.4 255.5M492.9 884.5L477.4 856.5M508.7 745L524.3 716.7M227 487.2L227 518.2M198.5 688.7L198.5 719.7M857 534.7L829.4 518.7M523.9 884.5L508.4 856.5M756.6 912.5L773.7 884M884.8 798.7L912.5 783.1M884.8 549.8L856.3 569.1M255.5 874.5L255.8 905.6M912.5 752L912.5 783.1M539.5 744.4L524.3 716.7M312.5 750.7L312.5 781.7M523.4 568.9L547.1 550M312.5 781.7L312.4 812.7M306.4 942.3L322.4 968.5M393 459.3L396.7 486.1M885.9 300.1L884.5 331.4M227 549.2L255.5 564.7M284 580.2L312.5 595.7M227.3 923.7L255.8 905.6M884.5 331.4L884.8 363.1M456.7 671.8L486 651.2M857.1 783.1L857 814.3M368.5 286.8L353 255.5M255.5 843.7L284 828.2M834.6 941L818.4 968.5M340.5 827.8L365.4 811.6M227 580.2L255.5 595.7M311 408.6L338.8 423M458.2 703.4L488.5 682.3M857 814.3L857.1 845.7M335.7 352.3L309.5 375.3M284 611.2L312.5 595.7M741.3 349.2L726.3 379.9M721.4 647.4L718.9 674.2M804 286.3L788.4 255.5M774 549.6L774.2 579.5M890.4 274.7L865.4 280.4M227 487.2L198.5 502.7M774 674.4L746.3 689.8M746.1 752.9L718.3 737.1M802.2 658.9L774.2 644.5M884.8 674.3L856.3 655M857.2 378.6L828.4 393.9M283.4 888.4L286.7 918.7M803.1 940.7L819.6 913.6M570.4 800.5L554.9 772.5M617 772.1L601.1 743.7M371.1 842.4L358.7 868.8M429.4 499.9L454.4 499.5M446.3 318.1L477.4 318.1M398 642.2L398 673.2M477.4 318.1L508.5 318.1M477.4 380.7L508.5 380.7M309.5 375.3L335.3 390M884.8 861L912.5 876.4M679.5 286.8L664 255.5M884.8 518.8L884.8 549.8M227 363.2L198.5 378.7M508.5 380.7L539.6 380.7M456.8 475.2L492 474M227 766.2L255.5 781.7M774.2 644.5L742.5 625.5M255.8 905.6L286.7 918.7M492 474L523.6 474.6M369.5 564.7L398 549.2M284 797.2L312.5 781.7M227 797.2L255.5 812.7M312.5 595.7L341 580.2M454.9 548.3L488.2 564.8M725.4 912.5L756.6 912.5M586.2 349.4L601.8 380.7M369.5 595.7L398 580.2M709.9 940.5L740.9 940.5M585.8 475L567.8 509M523.9 828.5L554.9 828.5M617.3 349.4L632.9 380.7M709.9 884.5L741.2 884.4M409.9 853.5L402.3 808M884.8 487.6L857.1 472.1M774.2 518.5L747 532.9M663.6 800.6L695.5 800.9M912.5 503.2L912.5 534.3M554.9 884.5L539.4 856.5M570.6 744L587.1 712.7M539.4 856.5L523.9 828.5M353 255.5L384.1 255.5M227 549.2L227 580.2M227.3 923.7L229.4 968.5M601.8 255.5L632.9 255.5M289.8 313.7L303.8 342.3M740.2 829.9L726.6 803.5M585.9 884.5L570.4 856.5M827 647.4L838.5 625.5M601.1 743.7L611.8 716.2M720.8 575.6L710.5 598.5M539.4 968.5L570.4 968.5M718.3 737.1L715.5 771.8M493.1 772.7L508.7 745M227 673.2L198.5 688.7M695.1 380.7L726.3 379.9M772 940.5L787.4 968.5M227 518.2L255.5 502.7M857.4 347.5L857.2 378.6M284 642.2L312.5 657.7M398 611.2L426.5 595.7M255 347.7L282.1 362.2M369.7 783.1L398.7 767.6M312.4 812.7L340.6 797.2M803.1 940.7L787.4 968.5M492.9 286.8L477.4 318.1M284 673.2L312.5 688.7M371.7 437.4L393 459.3M807.5 443.3L803.8 471.1M570.7 380.7L555.2 412M312.5 471.7L341 487.2M741.8 286.8L757.3 255.5M524 412L508.4 443.3M384.2 913.1L415.3 912.6M748.1 408.7L760.3 447M885.9 300.1L854.3 313.5M539.4 856.5L570.4 856.5M691 688.7L663.1 672.7M801.7 720.9L774 736.5M788.2 912.8L806.4 885.8M884.8 705.3L857 689.4M774 736.5L746.1 752.9M585.9 772.4L617 772.1M198.5 502.7L198.5 533.7M884.8 363.1L857.2 378.6M255.5 688.7L255.5 719.7M773.7 884L757.5 855.8M884.8 736.4L857.1 720.9M774.2 767.6L747.8 783.6M227 766.2L227 797.2M884.8 394.3L912.5 378.8M912.5 814.2L912.5 845.3M570.4 912.5L554.9 884.5M632.4 800.5L648.4 772.3M430.3 884.3L446.1 856.3M312.5 564.7L312.5 595.7M409.9 853.5L433 829.4M664 255.5L695.1 255.5M284 549.2L284 580.2M461.9 884.5L477.4 856.5M884.8 487.6L912.5 472.1M228.6 255.5L248.9 281.9M341 549.2L341 580.2M884.8 767.5L912.5 783.1M838.5 598.5L870.5 598.5M226.3 298.2L228.6 255.5M488.2 564.8L478.7 595.2M792.2 415L800.9 374.5M283.8 858.9L310.6 872.9M306.4 942.3L337.7 941M337.3 286.6L352.7 318.2M600 506.9L616.4 535.5M414.2 380.1L428.1 410.6M396.7 486.1L429.4 499.9M369.5 657.7L398 673.2M227 859.2L255.5 874.5M801.7 720.9L801.7 752M426.6 533.4L453.7 518.8M726.2 318.1L710.6 349.4M368.5 286.8L384.1 318.1M632.9 443.3L648.1 474.1M227.3 923.7L198.5 905.7M632.8 505.4L652.9 537.4M788.2 912.8L819.6 913.6M341 766.3L369.7 783.1M648.1 474.1L661.3 501.5M394.5 408.5L371.7 437.4M726.6 803.5L751.8 808.4M661.4 646.6L663.1 672.7M718.9 674.2L691 688.7M446 380.6L428.1 410.6M678.7 475.3L690.7 514.9M679.5 349.4L695.1 380.7M709.1 477.4L724.4 509.6M884.8 705.3L912.5 689.8M718.3 705.4L687.5 721M884.8 549.8L857 534.7M399.9 940.5L384.2 913.1M338.8 423L335.3 390M616.9 884.5L632.4 856.5M746.3 689.8L718.3 705.4M857.1 720.9L829.4 705.3M885.3 576.7L902.5 598.5M647.9 884.5L663.4 856.5M885.3 576.7L856.3 569.1M601.4 856.5L585.9 828.5M335.3 390L362.3 402.3M827 576.7L806.5 598.5M804 286.3L835.4 284.7M661.4 646.6L642.9 626.4M740.9 940.5L756.4 968.5M632.9 443.3L663.9 443.3M227 580.2L255.5 564.7M427.8 720.1L458.2 703.4M710.7 286.8L695.1 255.5M523.9 940.5L554.9 940.5M555.2 286.8L570.7 318.1M312.1 440.4L338.8 423M398 673.2L426.7 657.6M523.9 884.5L554.9 884.5M284 735.2L312.5 750.7M632.9 380.7L617.3 412M430.7 349.4L414.2 380.1M227 518.2L198.5 502.7M476.9 800.5L508.4 800.5M399.7 286.8L415.2 255.5M857.2 378.6L830.5 362.5M601.4 856.5L632.4 856.5M227.3 923.7L198.5 936.7M830.5 362.5L800.9 374.5M227 363.2L227 394.2M857 409.8L828.4 393.9M801.6 783.1L774.3 797.7M524.3 716.7L539.7 688.1M884.8 798.7L857 814.3M648.4 772.3L680.1 773.6M415.2 255.5L446.3 255.5M632.4 912.5L647.9 884.5M884.8 425.4L857.1 441M255.5 750.7L255.5 781.7M442.3 441L420.7 465.9M884.8 829.8L857.1 845.7M446.1 856.3L461.8 828.7M429.4 499.9L420.7 465.9M353.4 968.5L384.4 968.5M601.4 968.5L632.4 968.5M312.5 626.7L312.5 657.7M477.4 856.5L492.9 828.5M586.2 286.8L570.7 255.5M198.5 781.7L198.5 812.7M547.1 672.6L523.4 653.7M912.5 285.5L912.5 255.5M309.5 375.3L303.8 342.3M312.5 657.7L312.5 688.7M369.5 719.7L369.6 750.9M750.2 505.5L739.7 479M311 408.6L335.3 390M399.9 940.5L384.4 968.5M369.6 750.9L369.7 783.1M870.5 598.5L902.5 598.5M274.9 285L290.8 255.5M227 704.2L198.5 719.7M227 797.2L255.5 781.7M482.8 621.6L486 651.2M426.4 564.6L454.9 580M850.6 255.5L865.4 280.4M227 456.2L255.5 471.7M454.9 580L488.2 564.8M803.8 471.1L786.5 451.6M369.5 688.7L398.2 704.3M857 689.4L857.1 720.9M426.5 595.7L454.5 610.7M617.3 349.4L601.8 380.7M278.4 335.7L303.8 342.3M477.4 380.7L492.9 412M772.9 286.8L757.4 318.3M398 549.2L426.4 564.6M369.5 719.7L398.4 735.5M801.6 783.1L800.2 814.9M430.8 286.8L446.3 318.1M648.4 349.4L632.9 380.7M694.9 443.7L709.1 477.4M508.5 380.7L524 412M461.1 411.6L476.5 443.1M746 564.5L720.8 575.6M666.9 699L640.7 688.1M282.1 362.2L303.8 342.3M912.5 627.6L912.5 658.7M279.4 946.1L260.4 968.5M601.1 743.7L587.1 712.7M461.9 940.5L446.4 912.5M857.1 783.1L829.4 767.6M493.1 772.7L481.9 748.1M726.2 255.5L757.3 255.5M227 580.2L198.5 595.7M709.9 884.5L725.5 856.6M912.5 627.6L902.5 625.5M820.2 314.5L833.6 336.5M321.1 316.6L352.7 318.2M398.2 517.8L398 549.2M371.1 842.4L402.3 808M748.1 408.7L773.1 384.8M352.7 318.2L384.1 318.1M356.1 375.1L382.6 378.2M884.8 394.3L884.8 425.4M857.4 347.5L833.6 336.5M382.6 378.2L414.2 380.1M227 642.2L255.5 657.7M255 347.7L278.4 335.7M694.9 443.7L726.6 444.7M227 673.2L255.5 688.7M284 673.2L312.5 657.7M312.5 471.7L340.9 455.6M255.3 378.6L282.1 362.2M398.4 735.5L428.1 751.7M830.5 362.5L828.4 393.9M632.7 740.2L654.1 717.6M774.2 644.5L774 674.4M585.9 940.5L616.9 940.5M617.3 286.8L632.9 318.1M461.9 940.5L477.4 968.5M312.5 502.7L341 487.2M695.1 380.7L711.3 411.8M774 674.4L774 705.4M642.9 626.4L678.5 625.5M492.9 349.4L508.5 380.7M884.5 331.4L854.3 313.5M227 456.2L198.5 471.7M648.4 286.8L664 318.1M585.9 884.5L616.9 884.5M539.4 800.5L570.4 800.5M774.2 767.6L746.1 752.9M227 890.4L198.5 905.7M570.4 800.5L601.4 800.5M227 425.2L227 456.2M857.1 472.1L830.1 456.7M884.8 861L857.3 877.1M461.9 884.5L446.1 856.3M694.4 912.5L709.9 884.5M481.9 748.1L490.7 717.5M227 456.2L227 487.2M337.7 941L352.9 913.8M800.9 374.5L773.1 384.8M725.4 912.5L741.2 884.4M255.5 843.7L255.5 874.5M510.3 626.4L510.3 596.2M337.7 941L353.4 968.5M757.5 855.8L770.1 826.8M570.7 380.7L601.8 380.7M312.5 719.7L312.5 750.7M510.3 596.2L523.4 568.9M690.7 514.9L686.8 565.5M554.7 475.1L585.8 475M454.5 610.7L482.8 621.6M835.4 284.7L854.3 313.5M884.8 518.8L912.5 534.3M227 859.2L255.5 843.7M772 940.5L803.1 940.7M312.5 688.7L341 673.2M368.5 286.8L352.7 318.2M227 890.4L255.5 874.5M455.4 641.1L482.8 621.6M426.7 657.6L456.7 671.8M678.7 475.3L661.3 501.5M679.5 349.4L664 380.7M709.1 477.4L739.7 479M835.4 284.7L820.2 314.5M409.9 853.5L446.1 856.3M718.3 705.4L691 688.7M229.4 968.5L255.9 938M835.4 284.7L819.5 255.5M710.6 349.4L695.1 380.7M513.1 691.4L488.5 682.3M458.9 770.4L493.1 772.7M198.5 471.7L198.5 502.7M746.3 689.8L718.9 674.2M912.5 316.6L912.5 347.7M647.9 884.5L632.4 856.5M227 642.2L227 673.2M746.3 721.1L718.3 705.4M415.4 968.5L446.4 968.5M678.9 884.5L663.4 856.5M554.9 772.5L570.6 744M857.4 347.5L830.5 362.5M227 673.2L227 704.2M283.8 425.1L284 456.2M647.9 940.5L663.4 968.5M198.5 843.7L198.5 874.7M458.9 770.4L458.3 735.9M284 456.2L284 487.2M338.8 423L340.9 455.6M340.9 455.6L341 487.2M398 580.2L398 611.2M678.9 940.5L663.4 968.5M415.2 318.1L446.3 318.1M227 394.2L198.5 409.7M398 611.2L398 642.2M884.8 456.5L884.8 487.6M446 380.6L477.4 380.7M227 704.2L255.5 719.7M312.5 533.7L341 549.2M884.8 487.6L884.8 518.8M828.4 393.9L829 426M227 735.2L255.5 750.7M369.5 533.7L398 549.2M284 735.2L312.5 719.7M227 425.2L198.5 409.7M312.5 564.7L341 580.2M255.5 440.7L283.8 425.1M792.2 415L786.5 451.6M829 426L830.1 456.7M800.2 814.9L770.1 826.8M774 705.4L774 736.5M523.6 474.6L537 507.9M508.5 318.1L524 349.4M310.6 872.9L336.6 887.8M774 736.5L774.2 767.6M555.2 349.4L570.7 380.7M710.7 286.8L726.2 318.1M857.1 503.2L829.4 518.7M801.7 534.3L774.2 518.5M442.3 441L407.4 437.4M884.8 829.8L857 814.3M857 534.7L829.2 549.8M835.4 284.7L850.6 255.5M523.9 884.5L539.4 856.5M477.4 856.5L461.8 828.7M539.5 744.4L556 714.7M508.4 856.5L492.9 828.5M834.6 941L864.8 944M827 576.7L838.5 598.5M601.8 318.1L632.9 318.1M666.1 745.9L687.5 721M369.7 783.1L402.3 808M739.7 479L724.4 509.6M632.9 318.1L664 318.1M632.9 380.7L664 380.7M547.1 550L576.6 543.3M227 735.2L198.5 719.7M664 380.7L695.1 380.7M617.2 474.7L648.1 474.1M426.5 595.7L454.9 580M827 647.4L829.2 674.3M834.6 941L849.4 968.5M398 549.2L426.6 533.4M648.1 474.1L678.7 475.3M312.5 750.7L341 735.2M255.5 657.7L284 642.2M885.8 924.1L912.5 938.6M430.8 286.8L415.2 318.1M746 658.9L746.3 689.8M508.5 380.7L492.9 412M284 611.2L312.5 626.7M741.3 349.2L752.5 375.7M461.1 411.6L442.3 441M369.6 750.9L398.4 735.5M257 314L278.4 335.7M321.3 916L352.9 913.8M446.1 856.3L477.4 856.5M461.9 286.8L446.3 318.1M486 651.2L510.3 626.4M665.4 582.6L654.8 570.4M539.6 380.7L524 412M492.9 412L476.5 443.1M477.4 856.5L508.4 856.5M686.8 565.5L665.4 582.6M665.4 582.6L678.5 598.5M198.5 285.7L198.5 316.7M884.8 674.3L857 689.4M523.9 772.5L554.9 772.5M384.1 255.5L415.2 255.5M912.5 347.7L912.5 378.8M827 647.4L802.2 658.9M616.9 940.5L601.4 968.5M709.9 884.5L694.4 856.5M515.1 537.1L488.2 564.8M227 704.2L227 735.2M570.4 968.5L601.4 968.5M884.5 331.4L912.5 347.7M820.2 314.5L854.3 313.5M570.4 800.5L585.9 772.4M492.9 286.8L508.5 255.5M617 772.1L632.7 740.2M741.2 884.4L725.5 856.6M371.1 842.4L381.6 867.4M198.5 750.7L198.5 781.7M284 487.2L284 518.2M654.8 570.4L642.9 596.2M806.4 885.8L795.3 851.6M884.8 798.7L912.5 814.2M284 518.2L284 549.2M341 487.2L341 518.2M857.4 347.5L854.3 313.5M341 518.2L341 549.2M515.1 537.1L523.4 568.9M505.4 504.1L482 528.7M398 673.2L398.2 704.3M284 797.2L312.4 812.7M398.7 767.6L428.1 751.7M255.5 502.7L284 518.2M312.5 595.7L341 611.2M508.4 912.5L539.4 912.5M856.3 569.1L838.5 598.5M884.8 549.8L885.3 576.7M648.4 286.8L632.9 318.1M492.9 940.5L477.4 968.5M284 828.2L312 843.4M369.5 595.7L398 611.2M802.2 658.9L801.8 689.8M312.5 626.7L341 642.2M679.6 412L663.9 443.3M341 487.2L369 471.5M305.8 286L321.1 316.6M382.6 378.2L394.5 408.5M368.5 286.8L384.1 255.5M585.8 475L600 506.9M679.5 286.8L664 318.1M884.8 674.3L912.5 689.8M721.4 647.4L691.8 654.8M539.7 688.1L547.1 672.6M508.7 745L539.5 744.4M337.7 941L321.3 916M884.5 892.8L857.3 877.1M539.4 856.5L554.9 828.5M856.3 655L827 647.4M695.1 255.5L726.2 255.5M725.4 912.5L709.9 884.5M368.8 940.6L352.9 913.8M585.9 884.5L601.4 856.5M554.9 828.5L539.4 800.5M912.5 658.7L902.5 625.5M718.3 737.1L693.7 750.1M284 704.2L284 735.2M570.4 856.5L554.9 828.5M341 704.2L341 735.2M664 318.1L695.1 318.1M426.4 564.6L426.5 595.7M695.1 318.1L726.2 318.1M726.3 379.9L752.5 375.7M398 611.2L426.5 626.6M426.7 657.6L455.4 641.1M679.5 286.8L695.1 255.5M312.4 812.7L340.5 827.8M492.9 286.8L508.5 318.1M570.7 380.7L586.2 412M524 412L539.6 443.3M774.2 518.5L774 549.6M427.2 688.6L456.7 671.8M524 286.8L539.6 318.1M829.4 736.4L829.4 767.6M461.9 884.5L492.9 884.5M555.2 412L570.7 443.3M691 688.7L666.9 699M198.5 316.7L198.5 347.7M746.1 752.9L747.8 783.6M601.8 380.7L586.2 412M912.5 378.8L912.5 409.9M554.9 940.5L570.4 968.5M884.8 736.4L857.1 752M687.5 721L666.9 699M686.8 565.5L654.8 570.4M857.3 877.1L829.7 863.1M490.7 717.5L513.1 691.4M884.8 767.5L857.1 783.1M757.5 855.8L740.2 829.9M912.5 565.4L912.5 596.5M399.7 286.8L430.8 286.8M687.5 721L654.1 717.6M770.1 826.8L751.8 808.4M368.5 348.9L399.5 349.1M524 412L555.2 412M227 735.2L255.5 719.7M312.5 564.7L341 549.2M800.2 814.9L795.3 851.6M856.3 655L838.5 625.5M508.5 318.1L492.9 349.4M337.3 286.6L321.9 255.5M426.6 533.4L454.9 548.3M255.5 564.7L284 580.2M274.9 285L248.9 281.9M341 549.2L369.5 564.7M710.7 286.8L695.1 318.1M490.7 717.5L458.2 703.4M678.9 884.5L709.9 884.5M601.4 912.5L632.4 912.5M446 380.6L461.1 411.6M741.8 286.8L726.2 318.1M632.4 800.5L663.6 800.6M458.9 770.4L428.1 751.7M227 518.2L227 549.2M399.9 940.5L415.3 912.6M338.8 423L362.3 402.3M856.3 569.1L829.2 549.8M570.6 744L601.1 743.7M857.1 720.9L829.4 736.4M384.4 968.5L415.4 968.5M227 611.2L198.5 626.7M601.4 856.5L616.9 828.5M198.5 564.7L198.5 595.7M255 347.7L255.3 378.6M198.5 812.7L198.5 843.7M788.2 912.8L773.7 884M430.9 940.5L415.3 912.6M632.4 856.5L647.9 828.5M912.5 876.4L912.5 907.5M284 766.2L284 797.2M365.4 811.6L402.3 808M257 314L248.9 281.9M396.7 486.1L398.2 517.8M661.4 646.6L629.8 653.7M884.8 487.6L912.5 503.2M648.4 286.8L632.9 255.5M884.8 363.1L884.8 394.3M652.9 537.4L654.8 570.4M227 394.2L255.3 378.6M312.1 440.4L340.9 455.6M398 673.2L427.2 688.6M889.9 949.3L912.5 938.6M857.1 845.7L857.3 877.1M486 651.2L523.4 653.7M255.5 781.7L284 797.2M774.1 351.9L752.5 375.7M384.1 318.1L399.5 349.1M632.9 380.7L648.4 412M398.2 704.3L427.8 720.1M475 500.9L482 528.7M665.4 582.6L642.9 596.2M430.7 349.4L446 380.6M586.2 286.8L601.8 318.1M664 380.7L679.6 412M617.3 412L632.9 443.3M718.9 544.8L720.8 575.6M857 409.8L829 426M587.1 712.7L606.1 672.6M198.5 347.7L198.5 378.7M453.7 518.8L454.4 499.5M616.9 940.5L601.4 912.5M884.8 363.1L912.5 347.7M654.8 570.4L629.8 568.9M884.8 705.3L912.5 720.9M524 286.8L508.5 255.5M647.9 940.5L632.4 912.5M461.8 828.7L476.9 800.5M854.3 313.5L833.6 336.5M884.8 829.8L912.5 814.2M750.2 505.5L724.4 509.6M746 658.9L742.5 625.5M523.4 653.7L510.3 626.4M890.4 274.7L912.5 255.5M539.6 380.7L570.7 380.7M255.5 502.7L284 487.2M829.6 487.6L829.4 518.7M227 797.2L198.5 812.7M523.6 474.6L554.7 475.1M284 828.2L312.4 812.7M255.5 533.7L284 518.2M312.5 626.7L341 611.2M454.9 580L478.7 595.2M227 828.2L255.5 812.7M740.9 940.5L772 940.5M772.9 286.8L788.9 317.5M312.5 657.7L341 642.2M427.8 720.1L458.3 735.9M227 828.2L198.5 812.7M648.4 349.4L664 380.7M710.7 286.8L726.2 255.5M804 286.3L820.2 314.5M741.2 884.4L773.7 884M601.8 318.1L586.2 349.4M539.7 688.1L576.6 679.3M426.5 626.6L455.4 641.1M371.7 437.4L362.3 402.3M663.4 912.5L694.4 912.5M456.8 475.2L420.7 465.9M804 286.3L819.5 255.5M802.2 565.1L806.5 598.5M828.4 831L795.3 851.6M695.5 800.9L726.6 803.5M428.1 751.7L458.3 735.9M461.8 828.7L492.9 828.5M829.6 487.6L803.8 471.1M198.5 285.7L228.6 255.5M802.2 658.9L806.5 625.5M227 580.2L227 611.2M461.9 940.5L477.4 912.5M857.1 783.1L829.2 798.8M721.4 647.4L710.5 625.5M492.9 940.5L508.4 912.5M282.1 362.2L283.5 393.7M679 828.6L695.5 800.9M477.4 255.5L508.5 255.5M756.4 968.5L787.4 968.5M283.5 393.7L283.8 425.1M694.4 856.5L710 829M312 843.4L310.6 872.9M864.8 944L854.1 911.8M709.9 940.5L694.4 968.5M663.4 968.5L694.4 968.5M884.8 456.5L912.5 441M606.1 550L629.8 568.9M586.2 286.8L601.8 255.5M629.8 568.9L642.9 596.2M912.5 938.6L911.4 968.5M398 549.2L398 580.2M884.5 892.8L912.5 907.5M255.3 378.6L283.5 393.7M399.9 940.5L415.4 968.5M884.8 425.4L884.8 456.5M632.7 740.2L628.9 707.6M524 286.8L508.5 318.1M433 829.4L402.3 808M312.5 502.7L341 518.2M555.2 412L539.6 443.3M255.5 409.7L283.8 425.1M856.3 569.1L870.5 598.5M446.3 318.1L461.8 349.4M726.3 379.9L748.1 408.7M585.9 940.5L570.4 968.5M695.5 800.9L715.5 771.8M884.8 767.5L857.1 752M760.3 447L786.5 451.6M857.1 472.1L829.6 487.6M227 797.2L227 828.2M461.9 286.8L477.4 255.5M829.4 736.4L801.7 720.9M198.5 626.7L198.5 657.7M475 500.9L453.7 518.8M687.5 721L693.7 750.1M284 580.2L284 611.2M279.4 946.1L291.4 968.5M341 580.2L341 611.2M539.6 318.1L570.7 318.1M341 611.2L341 642.2M398.4 735.5L398.7 767.6M746.1 752.9L715.5 771.8M488.5 682.3L523.4 653.7M570.7 318.1L601.8 318.1M227 766.2L198.5 750.7M885.3 647.4L884.8 674.3M601.8 380.7L632.9 380.7M255.5 564.7L284 549.2M312.5 688.7L341 704.2M884.8 674.3L884.8 705.3M341 549.2L369.5 533.7M829.2 549.8L827 576.7M585.8 475L617.2 474.7M283.4 888.4L310.6 872.9M227 890.4L255.8 905.6M255.5 595.7L284 580.2M455.4 641.1L486 651.2M341 580.2L369.5 564.7M803.1 940.7L818.4 968.5M747 532.9L746 564.5M428.1 410.6L442.3 441M803.1 940.7L834.6 941M312.5 719.7L341 704.2M710.6 349.4L726.3 379.9M819.6 913.6L833.4 890.2M746.3 721.1L718.3 737.1M857.1 752L829.4 736.4M829.2 549.8L801.7 534.3M678.9 884.5L694.4 856.5M227 642.2L198.5 626.7M493.1 772.7L523.9 772.5M632.4 856.5L616.9 828.5M884.8 394.3L912.5 409.9M274.9 285L305.8 286M663.4 856.5L647.9 828.5M554.9 940.5L570.4 912.5M854.1 911.8L833.4 890.2M850.6 255.5L881.7 255.5M757.4 318.3L788.9 317.5M884.8 425.4L912.5 409.9M321.1 316.6L303.8 342.3M833.4 890.2L806.4 885.8M642.9 596.2L678.5 598.5M788.9 317.5L820.2 314.5M394.5 408.5L428.1 410.6M884.8 861L912.5 845.3M428.1 410.6L461.1 411.6M611.8 716.2L628.9 707.6M505.4 504.1L537 507.9M321.3 916L286.7 918.7M255.5 781.7L284 766.2M384.1 318.1L368.5 348.9M475 500.9L454.4 499.5M889.9 949.3L864.8 944M537 507.9L567.8 509M255.5 440.7L284 456.2M398.2 704.3L427.2 688.6M446.4 912.5L477.4 912.5M338.8 423L371.7 437.4M255.5 812.7L284 797.2M586.2 286.8L570.7 318.1M856.3 655L870.5 625.5M664 380.7L648.4 412M255.5 471.7L284 487.2M617.3 412L601.8 443.3M477.4 912.5L508.4 912.5M340.9 455.6L369 471.5M648.4 412L632.9 443.3M632.4 856.5L663.4 856.5M691.8 654.8L678.5 625.5M801.7 534.3L774 549.6M430.8 286.8L415.2 255.5M611.8 716.2L606.1 672.6M279.4 946.1L286.7 918.7M828.4 393.9L792.2 415M912.5 441L912.5 472.1M461.8 828.7L443.7 802.4M884.8 736.4L912.5 720.9M227 859.2L227 890.4M829 426L807.5 443.3M508.4 800.5L493.1 772.7M885.3 647.4L870.5 625.5M829.2 798.8L801.6 783.1M539.6 255.5L570.7 255.5M508.4 856.5L523.9 828.5M492.9 828.5L476.9 800.5M227 890.4L227.3 923.7M772 940.5L788.2 912.8M284 642.2L284 673.2M834.6 941L854.1 911.8M284 673.2L284 704.2M341 642.2L341 673.2M690.7 514.9L718.9 544.8M341 673.2L341 704.2M429.4 499.9L426.6 533.4M426.6 533.4L426.4 564.6M884.8 705.3L884.8 736.4M305.8 286L290.8 255.5M255.5 657.7L284 673.2M312.5 750.7L341 766.3M884.8 736.4L884.8 767.5M523.9 828.5L539.4 800.5M804 286.3L788.9 317.5M369.6 750.9L398.7 767.6M426.5 626.6L454.5 610.7M312.5 781.7L340.6 797.2M341 642.2L369.5 626.7M461.9 286.8L477.4 318.1M829.2 674.3L829.4 705.3M741.8 286.8L726.2 255.5M539.6 380.7L555.2 412M492.9 412L508.4 443.3M428.1 751.7L426.3 779.8M632.7 740.2L666.1 745.9M746.3 689.8L746.3 721.1M492.9 940.5L477.4 912.5M198.5 440.7L198.5 471.7M490.7 717.5L488.5 682.3M679 828.6L663.6 800.6M857 814.3L829.2 798.8M523.9 940.5L508.4 912.5M741.2 884.4L757.5 855.8M694.4 856.5L679 828.6M710 829L695.5 800.9M884.8 363.1L912.5 378.8M283.8 858.9L283.4 888.4M337.3 286.6L368.5 286.8M725.5 856.6L710 829M678.5 625.5L710.5 625.5M368.5 286.8L399.7 286.8M427.8 720.1L428.1 751.7M710.5 598.5L742.5 598.5M515.1 537.1L547.1 550M335.7 352.3L368.5 348.9M226.3 298.2L198.5 285.7M461.1 411.6L492.9 412M774.2 644.5L774.5 625.5M885.8 924.1L889.9 949.3M255.5 409.7L283.5 393.7M616.4 535.5L576.6 543.3M492.9 412L524 412M567.8 509L600 506.9M446.3 318.1L430.7 349.4M600 506.9L632.8 505.4M666.1 745.9L654.1 717.6M679.6 412L694.9 443.7M341 487.2L369.4 502.5M255.5 874.5L283.8 858.9M679.5 286.8L695.1 318.1M792.2 415L807.5 443.3M477.4 318.1L461.8 349.4M726.3 379.9L711.3 411.8M539.4 912.5L570.4 912.5M488.2 564.8L482 528.7M259.7 255.5L290.8 255.5M718.9 674.2L718.3 705.4M752.5 375.7L748.1 408.7M711.3 411.8L694.9 443.7M539.7 688.1L523.4 653.7M694.4 856.5L725.5 856.6M335.7 352.3L303.8 342.3M508.4 912.5L492.9 884.5M856.3 655L829.2 674.3M368.8 940.6L384.2 913.1M640.7 688.1L654.1 717.6M720.8 575.6L742.5 598.5M857 689.4L829.4 705.3M554.9 828.5L570.4 800.5M446.3 255.5L477.4 255.5M788.4 255.5L819.5 255.5M849.4 968.5L880.4 968.5M721.4 647.4L742.5 625.5M570.4 856.5L585.9 828.5M616.9 940.5L632.4 968.5M555.2 286.8L586.2 286.8M632.4 968.5L663.4 968.5M524 349.4L555.2 349.4M284 735.2L284 766.2M747.8 783.6L715.5 771.8M679.6 412L711.3 411.8M227 331.7L257 314M884.8 549.8L912.5 534.3M427.2 688.6L458.2 703.4M279.4 946.1L306.4 942.3M255.5 719.7L284 735.2M341 704.2L369.5 719.7M321.1 316.6L335.7 352.3M312 843.4L338.4 857.8M570.7 443.3L554.7 475.1M756.6 912.5L788.2 912.8M819.6 913.6L854.1 911.8M352.7 318.2L368.5 348.9M774.1 351.9L800.9 374.5M601.8 380.7L617.3 412M492.9 940.5L508.4 968.5M227 549.2L198.5 533.7M554.9 828.5L585.9 828.5M726.6 444.7L739.7 479M524.3 716.7L556 714.7M198.5 595.7L198.5 626.7M884.8 518.8L857.1 503.2M555.2 286.8L539.6 255.5M554.9 940.5L539.4 912.5M384.2 913.1L398.9 886M228.6 255.5L259.7 255.5M255.5 502.7L255.5 533.7M912.5 658.7L912.5 689.8M912.5 907.5L912.5 938.6M585.9 940.5L570.4 912.5M443.7 802.4L458.9 770.4M321.1 316.6L289.8 313.7M309.5 375.3L311 408.6M757.3 255.5L788.4 255.5M227 331.7L198.5 316.7M369 471.5L369.4 502.5M430.8 286.8L461.9 286.8M652.9 537.4L629.8 568.9M912.5 596.5L902.5 598.5M453.7 518.8L454.9 548.3M368.8 940.6L384.4 968.5M774.2 579.5L742.5 598.5M742.5 598.5L774.5 598.5M443.7 802.4L426.3 779.8M255.5 471.7L284 456.2M340.9 455.6L371.7 437.4M830.1 456.7L829.6 487.6M274.9 285L289.8 313.7M857.2 378.6L857 409.8M678.9 940.5L709.9 940.5M227 859.2L198.5 843.7M807.5 443.3L786.5 451.6M368.5 348.9L356.1 375.1M774.2 767.6L774.3 797.7M741.8 286.8L757.4 318.3M803.8 471.1L801.7 502.7M539.6 318.1L524 349.4M442.3 441L456.8 475.2M279.4 946.1L255.9 938M456.8 475.2L475 500.9M856.3 569.1L827 576.7M829 426L792.2 415M801.7 752L774.2 767.6M772 940.5L756.6 912.5M830.1 456.7L807.5 443.3M430.9 940.5L446.4 912.5M616.9 828.5L632.4 800.5M198.5 905.7L198.5 936.7M617.3 286.8L648.4 286.8M257 314L289.8 313.7M617.3 286.8L632.9 255.5M586.2 349.4L617.3 349.4M773.1 483.2L786.5 451.6M576.6 543.3L606.1 550M838.5 625.5L870.5 625.5M227 394.2L255.5 409.7M227 331.7L198.5 347.7M678.7 475.3L709.1 477.4M255.5 688.7L284 673.2M312.5 781.7L341 766.3M885.8 924.1L854.1 911.8M283.8 425.1L311 408.6M321.3 916L336.6 887.8M352.9 913.8L384.2 913.1M461.9 940.5L446.4 968.5M337.7 941L368.8 940.6M508.4 856.5L539.4 856.5M757.4 318.3L741.3 349.2M661.4 646.6L678.5 625.5M415.2 318.1L430.7 349.4M490.7 717.5L458.3 735.9M554.9 772.5L585.9 772.4M587.1 712.7L576.6 679.3M616.9 828.5L647.9 828.5M691.8 654.8L710.5 625.5M885.3 647.4L912.5 658.7M453.7 518.8L482 528.7M227 735.2L227 766.2M616.9 940.5L632.4 912.5M889.9 949.3L911.4 968.5M829.2 674.3L802.2 658.9M587.1 712.7L611.8 716.2M508.5 255.5L539.6 255.5M718.9 544.8L724.4 509.6M647.9 940.5L663.4 912.5M446.4 912.5L461.9 884.5M885.3 647.4L902.5 625.5M255.5 564.7L255.5 595.7M446.4 968.5L477.4 968.5M694.4 968.5L725.4 968.5M795.3 851.6L770.1 826.8M198.5 874.7L198.5 905.7M337.7 941L322.4 968.5M274.9 285L257 314M398.2 704.3L398.4 735.5M255.5 533.7L284 549.2M666.1 745.9L693.7 750.1M227 611.2L255.5 595.7M227 828.2L255.5 843.7M356.1 375.1L362.3 402.3M312.5 657.7L341 673.2M341 518.2L369.4 502.5M690.7 514.9L724.4 509.6M829.4 518.7L829.2 549.8M849.4 968.5L864.8 944M229.4 968.5L198.5 936.7M601.8 318.1L617.3 349.4M371.7 437.4L407.4 437.4M750.2 505.5L747 532.9M456.8 475.2L454.4 499.5M508.4 443.3L523.6 474.6M829.6 487.6L801.7 502.7M198.5 409.7L198.5 440.7M857 689.4L829.2 674.3M227 394.2L227 425.2M912.5 720.9L912.5 752M585.9 828.5L570.4 800.5M834.6 941L819.6 913.6M829.4 518.7L801.7 502.7M255.5 781.7L255.5 812.7M647.9 940.5L632.4 968.5M747.8 783.6L751.8 808.4M341 735.2L341 766.3M524 286.8L539.6 255.5M426.5 595.7L426.5 626.6M726.2 318.1L757.4 318.3M884.8 829.8L912.5 845.3M884.8 798.7L884.8 829.8M227 394.2L198.5 378.7M870.5 625.5L902.5 625.5M226.3 298.2L198.5 316.7M255.5 719.7L284 704.2M774.2 644.5L806.5 625.5M884.8 829.8L884.8 861M341 704.2L369.5 688.7M486 651.2L488.5 682.3M628.9 707.6L606.1 672.6M475 500.9L505.4 504.1M616.4 535.5L629.8 568.9M312 843.4L340.5 827.8M255.5 750.7L284 735.2M284 487.2L312.5 471.7M341 735.2L369.5 719.7M829.4 767.6L829.2 798.8M352.7 318.2L335.7 352.3M415.3 912.6L446.4 912.5M310.6 872.9L338.4 857.8M523.9 940.5L508.4 968.5M586.2 412L570.7 443.3M570.4 856.5L601.4 856.5M820.2 314.5L807.3 343.6M803.8 471.1L773.1 483.2M807.3 343.6L833.6 336.5M746 658.9L721.4 647.4M760.3 447L739.7 479M617 772.1L648.4 772.3M384.2 913.1L368.7 888.6M686.8 565.5L678.5 598.5M801.7 502.7L774.2 518.5M829.4 736.4L801.7 752M433 829.4L443.7 802.4M227 828.2L227 859.2M709.9 940.5L725.4 912.5M476.9 800.5L458.9 770.4M857.3 877.1L854.1 911.8M885.3 576.7L870.5 598.5M368.7 888.6L336.6 887.8M399.5 349.1L430.7 349.4M284 611.2L284 642.2M394.5 408.5L362.3 402.3M715.5 771.8L693.7 750.1M890.4 274.7L881.7 255.5M443.7 802.4L402.3 808M555.2 412L586.2 412M393 459.3L407.4 437.4M774.3 797.7L770.1 826.8M709.9 940.5L725.4 968.5M661.3 501.5L690.7 514.9M255.5 595.7L284 611.2M341 580.2L369.5 595.7M369 471.5L393 459.3M284 704.2L312.5 688.7M772.9 286.8L757.3 255.5M312.5 719.7L341 735.2M255.5 626.7L284 642.2M632.4 912.5L663.4 912.5M282.1 362.2L309.5 375.3M341 611.2L369.5 626.7M476.5 443.1L456.8 475.2M664 318.1L679.5 349.4M492 474L475 500.9M433 829.4L461.8 828.7M482.8 621.6L510.3 626.4M226.3 298.2L248.9 281.9M801.7 752L774 736.5M819.6 913.6L806.4 885.8M601.1 743.7L632.7 740.2M857.1 752L829.4 767.6M884.8 394.3L857.2 378.6M829.2 549.8L802.2 565.1M321.9 255.5L353 255.5M409.9 853.5L371.1 842.4M616.9 828.5L601.4 800.5M255.3 378.6L255.5 409.7M585.9 940.5L601.4 968.5M508.4 968.5L539.4 968.5M663.4 856.5L679 828.6M647.9 828.5L632.4 800.5M255.5 409.7L255.5 440.7M284 797.2L284 828.2M284 828.2L283.8 858.9M340.6 797.2L340.5 827.8M305.8 286L337.3 286.6M340.5 827.8L338.4 857.8M426.7 657.6L427.2 688.6M678.5 598.5L710.5 598.5M885.8 924.1L864.8 944M227 363.2L198.5 347.7M321.3 916L307.6 897M427.2 688.6L427.8 720.1M884.8 861L884.5 892.8M774.2 579.5L774.5 598.5M807.3 343.6L830.5 362.5M227 766.2L198.5 781.7M352.9 913.8L336.6 887.8M255.5 812.7L284 828.2M884.5 892.8L885.8 924.1M284 549.2L312.5 564.7M829.2 798.8L828.4 831M398.2 517.8L429.4 499.9M567.8 509L576.6 543.3M399.7 286.8L384.1 318.1M661.3 501.5L652.9 537.4M340.6 797.2L369.7 783.1M828.4 831L829.7 863.1M415.2 318.1L399.5 349.1M648.4 412L663.9 443.3M889.9 949.3L880.4 968.5M912.5 409.9L912.5 441M884.8 674.3L912.5 658.7M454.9 548.3L482 528.7M774.2 644.5L746 658.9M259.7 255.5L248.9 281.9M446.4 912.5L430.3 884.3M398.7 767.6L402.3 808M508.4 800.5L523.9 772.5M802.2 565.1L774.2 579.5M829.2 798.8L800.2 814.9M306.4 942.3L321.3 916M398.9 886L381.6 867.4M477.4 912.5L461.9 884.5M492.9 828.5L508.4 800.5M585.9 772.4L601.1 743.7M885.9 300.1L912.5 316.6M492.9 286.8L524 286.8M227 642.2L198.5 657.7"/></g><g shape-rendering="crispEdges"><rect x="646.5" y="598.5" width="266" height="27" fill="#ccccff" stroke="#000"/><path d="M646.5 625.5L678.5 598.5M678.5 598.5V625.5M678.5 625.5L710.5 598.5M710.5 598.5V625.5M710.5 625.5L742.5 598.5M742.5 598.5V625.5M742.5 625.5L774.5 598.5M774.5 598.5V625.5M774.5 625.5L806.5 598.5M806.5 598.5V625.5M806.5 625.5L838.5 598.5M838.5 598.5V625.5M838.5 625.5L870.5 598.5M870.5 598.5V625.5M870.5 625.5L902.5 598.5M902.5 598.5V625.5M902.5 625.5L912.5 598.5" stroke="#000" fill="none"/></g><defs><linearGradient id="rimg" x1="0.8" y1="0.1" x2="0.2" y2="0.9"><stop offset="0" stop-color="#f0a4a4"/><stop offset="1" stop-color="#b07272"/></linearGradient></defs><circle cx="576.6" cy="611.3" r="69.3" fill="url(#rimg)"/><g stroke="none"><polygon points="546.7,674 578.4,677.6 577.3,677.2" fill="rgb(172, 110, 110)"/><polygon points="578.4,677.6 614.2,669.7 577.3,677.2" fill="rgb(172, 110, 110)"/><polygon points="614.2,669.7 636.8,639.9 635.7,639.6" fill="rgb(182, 117, 117)"/><polygon points="635.7,639.6 636.8,639.9 646.1,610" fill="rgb(197, 126, 126)"/><polygon points="518.2,648.9 516.8,623.4 507.1,612.6" fill="rgb(172, 110, 110)"/><polygon points="546.7,674 540.1,659.5 518.2,648.9" fill="rgb(172, 110, 110)"/><polygon points="635,573.7 606.5,548.6 611.3,562.5" fill="rgb(245, 163, 163)"/><polygon points="646.1,610 635,573.7 634.6,598.6" fill="rgb(240, 159, 159)"/><polygon points="516.8,623.4 516.4,582.7 507.1,612.6" fill="rgb(178, 114, 114)"/><polygon points="516.4,582.7 543.7,561.3 539,552.9" fill="rgb(203, 131, 131)"/><polygon points="539,552.9 543.7,561.3 574.8,545" fill="rgb(222, 145, 145)"/><polygon points="540.1,659.5 546.7,674 577.3,677.2" fill="rgb(172, 110, 110)"/><polygon points="606.5,548.6 574.8,545 611.3,562.5" fill="rgb(252, 170, 170)"/><polygon points="634.6,598.6 635.7,639.6 646.1,610" fill="rgb(244, 162, 162)"/><polygon points="577.3,677.2 614.2,669.7 607.7,660.7" fill="rgb(188, 121, 121)"/><polygon points="607.7,660.7 614.2,669.7 635.7,639.6" fill="rgb(208, 134, 134)"/><polygon points="540.1,659.5 516.8,623.4 518.2,648.9" fill="rgb(172, 110, 110)"/><polygon points="635,573.7 611.3,562.5 634.6,598.6" fill="rgb(255, 179, 179)"/><polygon points="538.3,593.3 516.4,582.7 516.8,623.4" fill="rgb(220, 143, 143)"/><polygon points="538.3,593.3 543.7,561.3 516.4,582.7" fill="rgb(235, 155, 155)"/><polygon points="574.8,545 574.4,570 611.3,562.5" fill="rgb(255, 194, 194)"/><polygon points="574.8,545 543.7,561.3 574.4,570" fill="rgb(255, 183, 183)"/><polygon points="540.1,659.5 577.3,677.2 575.9,651.7" fill="rgb(211, 137, 137)"/><polygon points="575.9,651.7 577.3,677.2 607.7,660.7" fill="rgb(223, 146, 146)"/><polygon points="612,628.4 635.7,639.6 634.6,598.6" fill="rgb(255, 185, 185)"/><polygon points="612,628.4 607.7,660.7 635.7,639.6" fill="rgb(254, 172, 172)"/><polygon points="540.1,659.5 544.4,630.6 516.8,623.4" fill="rgb(212, 137, 137)"/><polygon points="634.6,598.6 611.3,562.5 605.8,591" fill="rgb(255, 207, 207)"/><polygon points="574.4,570 543.7,561.3 538.3,593.3" fill="rgb(255, 191, 191)"/><polygon points="544.4,630.6 538.3,593.3 516.8,623.4" fill="rgb(239, 158, 158)"/><polygon points="544.4,630.6 540.1,659.5 575.9,651.7" fill="rgb(234, 154, 154)"/><polygon points="611.3,562.5 574.4,570 605.8,591" fill="rgb(255, 217, 217)"/><polygon points="607.7,660.7 612,628.4 575.9,651.7" fill="rgb(255, 181, 181)"/><polygon points="605.8,591 612,628.4 634.6,598.6" fill="rgb(255, 211, 211)"/><polygon points="574.4,570 538.3,593.3 574.8,610.7" fill="rgb(255, 210, 210)"/><polygon points="574.8,610.7 538.3,593.3 544.4,630.6" fill="rgb(255, 195, 195)"/><polygon points="612,628.4 574.8,610.7 575.9,651.7" fill="rgb(255, 204, 204)"/><polygon points="575.9,651.7 574.8,610.7 544.4,630.6" fill="rgb(255, 192, 192)"/><polygon points="605.8,591 574.4,570 574.8,610.7" fill="rgb(255, 227, 227)"/><polygon points="612,628.4 605.8,591 574.8,610.7" fill="rgb(255, 223, 223)"/></g><path d="M546.7 674L578.4 677.6L577.3 677.2ZM578.4 677.6L614.2 669.7L577.3 677.2ZM614.2 669.7L636.8 639.9L635.7 639.6ZM635.7 639.6L636.8 639.9L646.1 610ZM518.2 648.9L516.8 623.4L507.1 612.6ZM546.7 674L540.1 659.5L518.2 648.9ZM635 573.7L606.5 548.6L611.3 562.5ZM646.1 610L635 573.7L634.6 598.6ZM516.8 623.4L516.4 582.7L507.1 612.6ZM516.4 582.7L543.7 561.3L539 552.9ZM539 552.9L543.7 561.3L574.8 545ZM540.1 659.5L546.7 674L577.3 677.2ZM606.5 548.6L574.8 545L611.3 562.5ZM634.6 598.6L635.7 639.6L646.1 610ZM577.3 677.2L614.2 669.7L607.7 660.7ZM607.7 660.7L614.2 669.7L635.7 639.6ZM540.1 659.5L516.8 623.4L518.2 648.9ZM635 573.7L611.3 562.5L634.6 598.6ZM538.3 593.3L516.4 582.7L516.8 623.4ZM538.3 593.3L543.7 561.3L516.4 582.7ZM574.8 545L574.4 570L611.3 562.5ZM574.8 545L543.7 561.3L574.4 570ZM540.1 659.5L577.3 677.2L575.9 651.7ZM575.9 651.7L577.3 677.2L607.7 660.7ZM612 628.4L635.7 639.6L634.6 598.6ZM612 628.4L607.7 660.7L635.7 639.6ZM540.1 659.5L544.4 630.6L516.8 623.4ZM634.6 598.6L611.3 562.5L605.8 591ZM574.4 570L543.7 561.3L538.3 593.3ZM544.4 630.6L538.3 593.3L516.8 623.4ZM544.4 630.6L540.1 659.5L575.9 651.7ZM611.3 562.5L574.4 570L605.8 591ZM607.7 660.7L612 628.4L575.9 651.7ZM605.8 591L612 628.4L634.6 598.6ZM574.4 570L538.3 593.3L574.8 610.7ZM574.8 610.7L538.3 593.3L544.4 630.6ZM612 628.4L574.8 610.7L575.9 651.7ZM575.9 651.7L574.8 610.7L544.4 630.6ZM605.8 591L574.4 570L574.8 610.7ZM612 628.4L605.8 591L574.8 610.7Z" stroke="#000" stroke-width="1" fill="none" shape-rendering="crispEdges"/><g shape-rendering="crispEdges" fill="none"><path d="M198.5 255.5H1054.5M198.5 968.5H1055.5" stroke="#000"/><path d="M198.5 256V968M912.5 256V968" stroke="#a8a8a8"/><path d="M198.5 126.5H530M581 126.5H912.5M198.5 113V252M912.5 112V252M1040.5 255.5V587M1040.5 637V968.5" stroke="#000"/></g><rect x="196.0" y="252.0" width="5" height="5" fill="#a0a0a0"/><rect x="910.0" y="252.0" width="5" height="5" fill="#a0a0a0"/><rect x="196.0" y="966.0" width="5" height="5" fill="#a0a0a0"/><rect x="910.0" y="967.0" width="5" height="5" fill="#a0a0a0"/><g shape-rendering="crispEdges" fill="none"><path d="M76.5 896V935.5" stroke="#00ff00"/><path d="M76.5 935.5H116" stroke="#ff0000"/></g></svg><div class="t" style="left:201.2px;top:241.64px;font-family:'Liberation Mono',monospace;font-size:13px;line-height:13px;letter-spacing:0.2px;color:#000">(-25, 25, 25)</div><div class="t" style="left:916px;top:241.64px;font-family:'Liberation Mono',monospace;font-size:13px;line-height:13px;letter-spacing:0.2px;color:#000">(25, 25, 25)</div><div class="t" style="left:201.2px;top:956.84px;font-family:'Liberation Mono',monospace;font-size:13px;line-height:13px;letter-spacing:0.2px;color:#000">(-25, -25, 25)</div><div class="t" style="left:916px;top:956.84px;font-family:'Liberation Mono',monospace;font-size:13px;line-height:13px;letter-spacing:0.2px;color:#000">(25, -25, 25)</div><div class="t" style="left:555px;top:117.04px;font-family:'Liberation Mono',monospace;font-size:13px;line-height:13px;letter-spacing:0.2px;color:#000">50</div><div class="t" style="left:912px;top:117.04px;font-family:'Liberation Mono',monospace;font-size:13px;line-height:13px;letter-spacing:0.2px;color:#000">50</div><div class="t" style="left:1040.5px;top:602.04px;font-family:'Liberation Mono',monospace;font-size:13px;line-height:13px;letter-spacing:0.2px;color:#000">50</div><div class="t" style="left:76px;top:878.04px;font-family:'Liberation Mono',monospace;font-size:13px;line-height:13px;letter-spacing:0.2px;color:#00ff00">y</div><div class="t" style="left:126px;top:926.04px;font-family:'Liberation Mono',monospace;font-size:13px;line-height:13px;letter-spacing:0.2px;color:#ff0000">x</div><div class="t" style="left:76px;top:926.04px;font-family:'Liberation Mono',monospace;font-size:13px;line-height:13px;letter-spacing:0.2px;color:#0000ff">z</div><div class="r" style="left:1191px;top:105px;width:361px;height:906px;background:#f0f0f0"></div><div class="r" style="left:1200px;top:110px;width:71px;height:21px;background:#f7f7f7;border:1px solid #d0d0d0;border-bottom:none;box-sizing:border-box"></div><div class="r" style="left:1271px;top:111px;width:77px;height:20px;background:#ececec;border:1px solid #d6d6d6;border-bottom:none;box-sizing:border-box"></div><div class="r" style="left:1200px;top:131px;width:344px;height:874px;background:#fff;border:1px solid #d0d0d0;box-sizing:border-box"></div><div class="r" style="left:1220px;top:150px;width:304px;height:110px;background:#fff;border:1px solid #d4d4d4;box-sizing:border-box"></div><div class="r" style="left:1220px;top:267px;width:304px;height:716px;background:#fff;border:1px solid #d4d4d4;box-sizing:border-box"></div><div class="r" style="left:1230px;top:302px;width:284px;height:672px;background:#fff;border:1px solid #828790;box-sizing:border-box"></div><div class="r" style="left:1440px;top:326px;width:72px;height:23px;background:#f4a8a8;border-right:2px solid #5a3a3a;border-bottom:2px solid #5a3a3a;box-sizing:border-box"></div><div class="r" style="left:1440px;top:350px;width:72px;height:23px;background:#aeb0f4;border-right:2px solid #3a3a5a;border-bottom:2px solid #3a3a5a;box-sizing:border-box"></div><div class="r" style="left:1440px;top:374px;width:72px;height:23px;background:#a8f0a8;border-right:2px solid #3a5a3a;border-bottom:2px solid #3a5a3a;box-sizing:border-box"></div><div class="r" style="left:0px;top:1011px;width:1552px;height:21px;background:#f0f0f0"></div><div class="t" style="left:7.7px;top:1016.27px;font-size:11.5px;line-height:11.5px;color:#000;font-family:"Liberation Sans", sans-serif;">| 97509 cells | 28274 nodes | 9082 boundary faces |&nbsp; Boundary name: wall (8898 faces) | File: *interp_morph_sample.qmf</div><svg class="r" style="left:1540px;top:1020px" width="10" height="10"><g fill="#b8b8b8"><rect x="6" y="0" width="2" height="2"/><rect x="3" y="3" width="2" height="2"/><rect x="6" y="3" width="2" height="2"/><rect x="0" y="6" width="2" height="2"/><rect x="3" y="6" width="2" height="2"/><rect x="6" y="6" width="2" height="2"/></g></svg><div class="r" style="left:1121px;top:113px;width:381px;height:458px;background:#f0f0f0;box-shadow:0 0 10px 2px rgba(0,0,0,0.28)"></div><div class="r" style="left:1121px;top:113px;width:381px;height:30px;background:#fff"></div><div class="t" style="left:1129.4px;top:120.90px;font-size:12.4px;line-height:12.4px;color:#9a9a9a;font-family:"Liberation Sans", sans-serif;">Interpolation Morphing</div><div class="r" style="left:1482px;top:120px;width:19px;height:19px;background:#e6e6e6"></div><div class="t" style="left:1341.5px;width:300px;text-align:center;top:123.84px;font-size:12px;line-height:12px;color:#f6f6f6;font-family:"Liberation Sans", sans-serif;">×</div><div class="t" style="left:1132.8px;top:153.75px;font-size:11.4px;line-height:11.4px;color:#000;font-family:"Liberation Sans", sans-serif;">Moving Boundary</div><div class="r" style="left:1141px;top:181px;width:341px;height:90px;background:#fff;border:1px solid #828790;box-sizing:border-box"></div><div class="r" style="left:1156px;top:182px;width:1px;height:83px;background:#dadada"></div><div class="r" style="left:1157px;top:234px;width:263px;height:1px;background:#d8d8d8"></div><div class="r" style="left:1157px;top:264px;width:324px;height:1px;background:#d8d8d8"></div><div class="r" style="left:1420px;top:205px;width:1px;height:59px;background:#e4e4e4"></div><div class="r" style="left:1142px;top:265px;width:14px;height:5px;background:#f0f0f0"></div><div class="r" style="left:1451px;top:205px;width:30px;height:29px;background:#ffaaaa"></div><div class="r" style="left:1451px;top:235px;width:30px;height:29px;background:#b4b4ff"></div><div class="t" style="left:1138px;width:300px;text-align:center;top:187.54px;font-size:12px;line-height:12px;color:#000;font-family:"Liberation Sans", sans-serif;">Zone</div><div class="t" style="left:1285.5px;width:300px;text-align:center;top:187.54px;font-size:12px;line-height:12px;color:#000;font-family:"Liberation Sans", sans-serif;">ID</div><div class="t" style="left:1147px;top:213.84px;font-size:12px;line-height:12px;color:#222;font-family:"Liberation Sans", sans-serif;">1</div><div class="t" style="left:1147px;top:243.84px;font-size:12px;line-height:12px;color:#222;font-family:"Liberation Sans", sans-serif;">2</div><div class="t" style="left:1160.2px;top:213.74px;font-size:12px;line-height:12px;color:#000;font-family:"Liberation Sans", sans-serif;">core</div><div class="t" style="left:1160.2px;top:243.54px;font-size:12px;line-height:12px;color:#000;font-family:"Liberation Sans", sans-serif;">duct</div><div class="t" style="left:1425px;top:213.84px;font-size:12px;line-height:12px;color:#000;font-family:"Liberation Sans", sans-serif;">5</div><div class="t" style="left:1425px;top:243.84px;font-size:12px;line-height:12px;color:#000;font-family:"Liberation Sans", sans-serif;">4</div><div class="r" style="left:1142px;top:278px;width:73px;height:21px;background:#e1e1e1;border:1px solid #adadad;box-sizing:border-box"></div><div class="t" style="left:1028.5px;width:300px;text-align:center;top:283.15px;font-size:11.4px;line-height:11.4px;color:#000;font-family:"Liberation Sans", sans-serif;">Select</div><svg class="r" style="left:1139px;top:323px" width="200" height="18"><circle cx="8.5" cy="8.3" r="6" fill="#fff" stroke="#333" stroke-width="1.2"/><circle cx="8.5" cy="8.3" r="3.3" fill="#333"/><circle cx="182" cy="8.8" r="6" fill="#fff" stroke="#333" stroke-width="1.2"/></svg><div class="t" style="left:1160.4px;top:326.45px;font-size:11.4px;line-height:11.4px;color:#000;font-family:"Liberation Sans", sans-serif;">Fix Mode</div><div class="t" style="left:1333.4px;top:326.45px;font-size:11.4px;line-height:11.4px;color:#000;font-family:"Liberation Sans", sans-serif;">Slide Mode</div><div class="t" style="left:1141.5px;top:350.15px;font-size:11.4px;line-height:11.4px;color:#000;font-family:"Liberation Sans", sans-serif;">Moving Vector</div><div class="r" style="left:1221px;top:346px;width:83px;height:20px;background:#fff;border:1px solid #7a7a7a;box-sizing:border-box"></div><div class="t" style="left:1225.2px;top:350.35px;font-size:11.4px;line-height:11.4px;color:#000;font-family:"Liberation Sans", sans-serif;">1.5</div><div class="r" style="left:1310px;top:346px;width:83px;height:20px;background:#fff;border:1px solid #7a7a7a;box-sizing:border-box"></div><div class="t" style="left:1314.2px;top:350.35px;font-size:11.4px;line-height:11.4px;color:#000;font-family:"Liberation Sans", sans-serif;">0.0</div><div class="r" style="left:1399px;top:346px;width:83px;height:20px;background:#fff;border:1px solid #7a7a7a;box-sizing:border-box"></div><div class="t" style="left:1403.2px;top:350.35px;font-size:11.4px;line-height:11.4px;color:#000;font-family:"Liberation Sans", sans-serif;">0.0</div><div class="t" style="left:1141px;top:375.95px;font-size:11.4px;line-height:11.4px;color:#000;font-family:"Liberation Sans", sans-serif;">Fixed Boundary Margin</div><div class="r" style="left:1277px;top:372px;width:205px;height:20px;background:#fff;border:1px solid #7a7a7a;box-sizing:border-box"></div><div class="t" style="left:1281.5px;top:375.95px;font-size:11.4px;line-height:11.4px;color:#000;font-family:"Liberation Sans", sans-serif;">0</div><div class="t" style="left:1141px;top:402.25px;font-size:11.4px;line-height:11.4px;color:#000;font-family:"Liberation Sans", sans-serif;">Moving Boundary Margin</div><div class="r" style="left:1277px;top:398px;width:205px;height:20px;background:#fff;border:1px solid #7a7a7a;box-sizing:border-box"></div><div class="t" style="left:1281.5px;top:402.25px;font-size:11.4px;line-height:11.4px;color:#000;font-family:"Liberation Sans", sans-serif;">0</div><div class="t" style="left:1141px;top:428.35px;font-size:11.4px;line-height:11.4px;color:#000;font-family:"Liberation Sans", sans-serif;">Effectable Length</div><div class="r" style="left:1277px;top:424px;width:205px;height:20px;background:#efefef;border:1px solid #d5d5d5;box-sizing:border-box"></div><div class="t" style="left:1281.5px;top:428.35px;font-size:11.4px;line-height:11.4px;color:#8a8a8a;font-family:"Liberation Sans", sans-serif;">10.0</div><div class="t" style="left:1141px;top:454.25px;font-size:11.4px;line-height:11.4px;color:#000;font-family:"Liberation Sans", sans-serif;">Outline Effectable Length</div><div class="r" style="left:1277px;top:450px;width:205px;height:20px;background:#fff;border:1px solid #7a7a7a;box-sizing:border-box"></div><div class="t" style="left:1281.5px;top:454.25px;font-size:11.4px;line-height:11.4px;color:#000;font-family:"Liberation Sans", sans-serif;">0.0</div><div class="t" style="left:1141px;top:480.35px;font-size:11.4px;line-height:11.4px;color:#000;font-family:"Liberation Sans", sans-serif;">Feature Angle</div><div class="r" style="left:1277px;top:476px;width:205px;height:20px;background:#efefef;border:1px solid #d5d5d5;box-sizing:border-box"></div><div class="t" style="left:1281.5px;top:480.35px;font-size:11.4px;line-height:11.4px;color:#8a8a8a;font-family:"Liberation Sans", sans-serif;">135</div><div class="t" style="left:1141px;top:506.35px;font-size:11.4px;line-height:11.4px;color:#000;font-family:"Liberation Sans", sans-serif;">Step Division</div><div class="r" style="left:1315px;top:502px;width:167px;height:20px;background:#fff;border:1px solid #7a7a7a;box-sizing:border-box"></div><div class="t" style="left:1319.5px;top:506.35px;font-size:11.4px;line-height:11.4px;color:#000;font-family:"Liberation Sans", sans-serif;">1</div><div class="r" style="left:1466px;top:504px;width:14px;height:8px;background:#e6e6e6;border:1px solid #cdcdcd;box-sizing:border-box"></div><div class="r" style="left:1466px;top:513px;width:14px;height:7px;background:#e6e6e6;border:1px solid #cdcdcd;box-sizing:border-box"></div><svg class="r" style="left:1466px;top:504px" width="14" height="16"><path d="M4 6h6L7 3z M4 10h6L7 13z" fill="#000"/></svg><div class="r" style="left:1336px;top:538px;width:73px;height:21px;background:#e1e1e1;border:1px solid #adadad;box-sizing:border-box"></div><div class="t" style="left:1222.5px;width:300px;text-align:center;top:543.35px;font-size:11.4px;line-height:11.4px;color:#000;font-family:"Liberation Sans", sans-serif;">Apply</div><div class="r" style="left:1417px;top:538px;width:73px;height:21px;background:#e1e1e1;border:1px solid #adadad;box-sizing:border-box"></div><div class="t" style="left:1303.5px;width:300px;text-align:center;top:543.35px;font-size:11.4px;line-height:11.4px;color:#000;font-family:"Liberation Sans", sans-serif;">Cancel</div><div class="r" style="left:0px;top:0px;width:1552px;height:1032px;border:1px solid #7b7b7b;box-sizing:border-box;background:transparent"></div>
</body></html>
